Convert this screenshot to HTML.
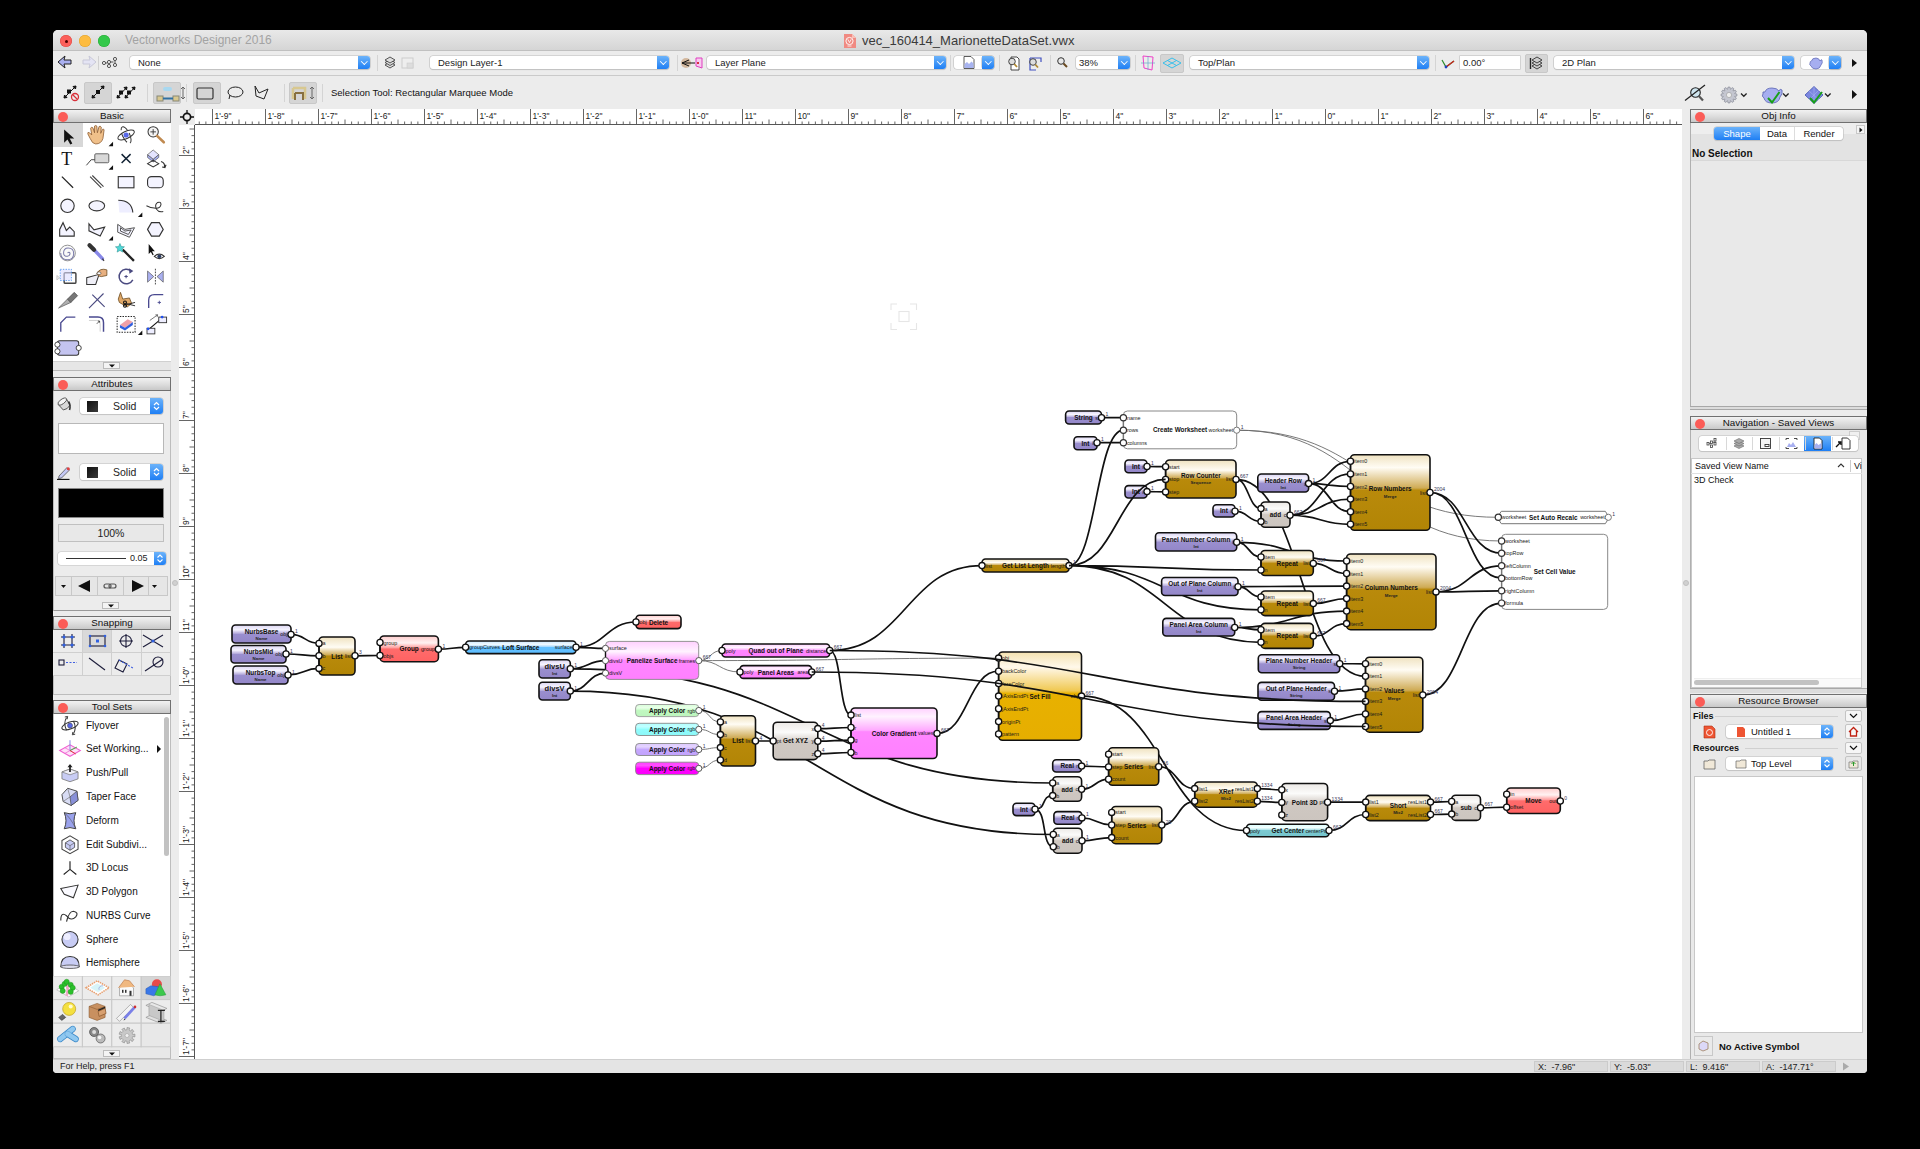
<!DOCTYPE html><html><head><meta charset="utf-8"><title>Vectorworks</title><style>

*{margin:0;padding:0;box-sizing:border-box}
html,body{width:1920px;height:1149px;background:#000;overflow:hidden;font-family:"Liberation Sans",sans-serif;color:#111}
.a{position:absolute}
.tl{position:absolute;width:12px;height:12px;border-radius:50%}
.dd{position:absolute;height:13px;background:#fff;border-radius:3px;box-shadow:0 0 0 0.6px #c0c0c0,0 0.6px 1px rgba(0,0,0,.18);font-size:9.5px;line-height:13px;padding-left:8px;color:#222;white-space:nowrap}
.dd .bb{position:absolute;right:0;top:0;width:12px;height:13px;border-radius:0 3px 3px 0;background:linear-gradient(#6cb3fa,#1f7ff4)}
.dd .bb:after{content:"";position:absolute;left:3.6px;top:2.6px;width:3.6px;height:3.6px;border-right:1.3px solid #fff;border-bottom:1.3px solid #fff;transform:rotate(45deg)}
.sep{position:absolute;width:1px;background:#d4d4d4}
.pbtn{position:absolute;background:#d5d5d5;border:1px solid #c8c8c8;border-radius:2px}
.ph{position:absolute;height:14px;background:linear-gradient(#f2f2f2,#dcdcdc 55%,#c8c8c8);border:1px solid #707070;font-size:9.8px;line-height:12px;text-align:center;color:#111}
.ph .cl{position:absolute;left:4px;top:1.5px;width:10px;height:10px;border-radius:50%;background:#fb5c57}
.rt{position:absolute;font-size:8.5px;color:#222;white-space:nowrap;line-height:9px}

</style></head><body>
<div class="a" style="left:53px;top:30px;width:1814px;height:1043px;background:#ececec;border-radius:5px 5px 4px 4px"></div>
<div class="a" style="left:53px;top:30px;width:1814px;height:21px;background:linear-gradient(#e9e9e9,#d5d5d5);border-bottom:1px solid #c0c0c0;border-radius:5px 5px 0 0"></div>
<div class="tl" style="left:60px;top:35px;background:#fc605b;box-shadow:inset 0 0 0 0.5px #de4a44"></div>
<div class="tl" style="left:79px;top:35px;background:#fdbc40;box-shadow:inset 0 0 0 0.5px #dfa02c"></div>
<div class="tl" style="left:98px;top:35px;background:#34c84a;box-shadow:inset 0 0 0 0.5px #27aa36"></div>
<div class="a" style="left:64.5px;top:39.5px;width:3px;height:3px;border-radius:50%;background:#4d0000"></div>
<div class="a" style="left:125px;top:33px;font-size:12px;color:#a3a3a3">Vectorworks Designer 2016</div>
<svg class="a" style="left:843px;top:33px" width="14" height="16"><path d="M1 1 H9 L13 5 V15 H1Z" fill="#f08a82"/><path d="M9 1 V5 H13" fill="#f8c0b8"/><circle cx="6.5" cy="8" r="3.6" fill="none" stroke="#fff" stroke-width="0.9"/><path d="M4.8 6.3 L6.5 9.5 L8.2 6.3" fill="none" stroke="#fff" stroke-width="0.8"/><path d="M4.5 13 H8.5" stroke="#fff" stroke-width="0.8"/></svg>
<div class="a" style="left:862px;top:33px;font-size:13px;color:#3a3a3a">vec_160414_MarionetteDataSet.vwx</div>
<div class="a" style="left:53px;top:75px;width:1814px;height:1px;background:#cacaca"></div>
<svg class="a" style="left:55px;top:53px" width="60" height="20"><path d="M3 9 L10 3 L9 7 L16 7 L16 11 L9 11 L10 15 Z" fill="#aab0f0" stroke="#222" stroke-width="1"/><path d="M41 9 L34 3 L35 7 L28 7 L28 11 L35 11 L34 15 Z" fill="#e4e4f4" stroke="#c8c8d8" stroke-width="1"/><line x1="43.5" y1="3" x2="43.5" y2="17" stroke="#d0d0d0"/></svg>
<svg class="a" style="left:101px;top:55px" width="20" height="16"><g fill="none" stroke="#555" stroke-width="1"><circle cx="3" cy="8" r="1.6"/><circle cx="8" cy="7" r="1.6"/><circle cx="8" cy="11" r="1.6"/><circle cx="14" cy="4" r="1.6"/><circle cx="14" cy="10" r="1.6"/><path d="M4.5 8 H6.5 M9.5 7 H12.5 M14 5.5 V8.5"/></g></svg>
<div class="dd" style="left:130px;top:56px;width:240px;font-size:9.5px">None<div class="bb"></div></div>
<div class="sep" style="left:377px;top:55px;height:16px"></div>
<svg class="a" style="left:383px;top:55px" width="34" height="16"><g stroke="#444" fill="#ddd" stroke-width="0.9"><path d="M2 10 L7 13 L12 10 L7 7Z"/><path d="M2 7.5 L7 10.5 L12 7.5 L7 4.5Z"/><path d="M2 5 L7 8 L12 5 L7 2Z"/></g><rect x="19" y="3" width="11" height="10" fill="#eee" stroke="#ccc"/><rect x="24" y="8" width="6" height="5" fill="#ddd" stroke="#ccc" stroke-width="0.6"/></svg>
<div class="dd" style="left:430px;top:56px;width:239px;font-size:9.5px">Design Layer-1<div class="bb"></div></div>
<div class="sep" style="left:677px;top:55px;height:16px"></div>
<svg class="a" style="left:680px;top:55px" width="26" height="16"><ellipse cx="6" cy="8" rx="5" ry="5" fill="#c9a27e" opacity=".7"/><path d="M2 8 L9 5 M2 8 L9 11 M2 8 H15" stroke="#111" stroke-width="1" fill="none"/><path d="M16 3 L22 3 L22 13 L16 11Z" fill="#f8c8f0" stroke="#e040c0" stroke-width="1"/><circle cx="18" cy="8" r="1" fill="#c00"/></svg>
<div class="dd" style="left:707px;top:56px;width:239px;font-size:9.5px">Layer Plane<div class="bb"></div></div>
<div class="sep" style="left:950px;top:55px;height:16px"></div>
<div class="a" style="left:954px;top:56px;width:40px;height:13px;background:#fff;border-radius:3px;box-shadow:0 0 0 0.6px #c0c0c0"></div>
<svg class="a" style="left:962px;top:55px" width="14" height="15"><path d="M2 1.5 H9 L12 4.5 V13.5 H2Z" fill="#fff" stroke="#333" stroke-width="0.8"/><path d="M2.5 13 V9 L5 7 L7 9 L9.5 6.5 L11.5 8.5 V13Z" fill="#a8b4f0"/></svg>
<div class="dd" style="left:982px;top:56px;width:12px;padding:0"><div class="bb"></div></div>
<div class="sep" style="left:999px;top:55px;height:16px"></div>
<svg class="a" style="left:1004px;top:54px" width="40" height="18"><g fill="none" stroke="#333" stroke-width="0.9"><path d="M7 3 H13 L15 5 V16 H7Z" fill="#fff"/><circle cx="8" cy="7.5" r="3.3" fill="#ddd"/><path d="M10.3 10 L13 13" stroke="#b08830" stroke-width="1.8"/><path d="M26 4 H37 V8 M26 4 V16 H32" stroke="#4050c0" stroke-width="1.2"/><circle cx="29" cy="8" r="3.3" fill="#ddd"/><path d="M31.3 10.5 L34 13.5" stroke="#b08830" stroke-width="1.8"/></g></svg>
<div class="sep" style="left:1050px;top:55px;height:16px"></div>
<svg class="a" style="left:1055px;top:55px" width="16" height="16"><circle cx="6" cy="6" r="3.3" fill="#e8e8e8" stroke="#333" stroke-width="1"/><path d="M8.5 8.5 L12 12" stroke="#6a4a20" stroke-width="2"/></svg>
<div class="dd" style="left:1076px;top:56px;width:54px;font-size:9.5px;padding-left:3px">38%<div class="bb"></div></div>
<div class="sep" style="left:1135px;top:55px;height:16px"></div>
<svg class="a" style="left:1139px;top:54px" width="18" height="18"><path d="M4 2 L14 3 L13 16 L5 14Z" fill="none" stroke="#ee40c8" stroke-width="1"/><path d="M2 9 H16 M9 2 V16" stroke="#6ac" stroke-width="0.7"/></svg>
<div class="pbtn" style="left:1160px;top:54px;width:24px;height:19px"></div>
<svg class="a" style="left:1161px;top:56px" width="22" height="14"><path d="M2 7 L11 2 L20 7 L11 12Z M6.5 4.5 L15.5 9.5 M15.5 4.5 L6.5 9.5" fill="none" stroke="#3ac0ea" stroke-width="1"/></svg>
<div class="dd" style="left:1190px;top:56px;width:239px;font-size:9.5px">Top/Plan<div class="bb"></div></div>
<div class="sep" style="left:1435px;top:55px;height:16px"></div>
<svg class="a" style="left:1439px;top:54px" width="18" height="18"><path d="M3 6 L7 13 L15 7" fill="none" stroke="#2a8a2a" stroke-width="1.2"/><path d="M7 13 L15 7" stroke="#d02020" stroke-width="1.2"/><circle cx="7" cy="13" r="1.4" fill="#2040c0"/></svg>
<div class="a" style="left:1460px;top:56px;width:60px;height:13px;background:#fff;box-shadow:0 0 0 0.6px #c0c0c0;font-size:9.5px;line-height:13px;padding-left:3px;color:#222">0.00°</div>
<div class="pbtn" style="left:1525px;top:54px;width:23px;height:19px"></div>
<svg class="a" style="left:1529px;top:56px" width="16" height="15"><g stroke="#333" fill="#ccc" stroke-width="0.9"><path d="M3 10 L8 13 L13 10 L8 7Z"/><path d="M3 7 L8 10 L13 7 L8 4Z"/><path d="M3 4 L8 7 L13 4 L8 1Z"/></g><path d="M1.5 2 V13" stroke="#222" stroke-width="1.4"/></svg>
<div class="dd" style="left:1554px;top:56px;width:240px;font-size:9.5px">2D Plan<div class="bb"></div></div>
<div class="a" style="left:1801px;top:56px;width:40px;height:13px;background:#fff;border-radius:3px;box-shadow:0 0 0 0.6px #c0c0c0"></div>
<svg class="a" style="left:1808px;top:55px" width="16" height="15"><path d="M2 8 Q1 10 3 11 Q4 14 8 14 Q12 14 13 10 Q15 8 14 5 Q13 4 12 6 Q11 3 8 3 Q4 3 3.5 6 Q2 6 2 8Z" fill="#a6aef0" stroke="#5a64b0" stroke-width="0.7"/></svg>
<div class="dd" style="left:1829px;top:56px;width:12px;padding:0"><div class="bb"></div></div>
<svg class="a" style="left:1850px;top:57px" width="10" height="12"><path d="M2 2 L7 6 L2 10Z" fill="#111"/></svg>
<div class="pbtn" style="left:84px;top:82px;width:28px;height:22px"></div>
<div class="pbtn" style="left:153px;top:82px;width:28px;height:22px"></div>
<div class="pbtn" style="left:193px;top:82px;width:28px;height:22px"></div>
<div class="pbtn" style="left:289px;top:82px;width:28px;height:22px"></div>
<div class="sep" style="left:147px;top:84px;height:18px"></div>
<div class="sep" style="left:186px;top:84px;height:18px"></div>
<div class="sep" style="left:284px;top:84px;height:18px"></div>
<div class="sep" style="left:322px;top:84px;height:18px"></div>
<svg class="a" style="left:60px;top:82px" width="270" height="24"><g stroke="#111" stroke-width="1" fill="#111">
<path d="M4 16 L16 4" /><rect x="7.5" y="8" width="3" height="3"/><path d="M16 4 l-3 0.5 l2.5 2.5z M4 16 l3-0.5 l-2.5-2.5z"/>
<circle cx="15" cy="15" r="3.5" fill="none" stroke="#d8303a" stroke-width="1.3"/><path d="M12.5 12.5 L17.5 17.5" stroke="#d8303a" stroke-width="1.3"/>
<path d="M32 16 L44 4"/><rect x="36.5" y="8.5" width="3" height="3"/><path d="M44 4 l-3 0.5 l2.5 2.5z M32 16 l3-0.5 l-2.5-2.5z"/>
<path d="M57 16 L67 5 M65 16 L75 5"/><rect x="59.5" y="9" width="3" height="3"/><rect x="67.5" y="9" width="3" height="3"/><path d="M67 5 l-3 0.5 l2.5 2.5z M75 5 l-3 0.5 l2.5 2.5z M57 16 l3-0.5 l-2.5-2.5z M65 16 l3-0.5 l-2.5-2.5z"/>
</g>
<g><rect x="103" y="5" width="9" height="4" rx="2" fill="#a8d8f0"/><rect x="97" y="14" width="6" height="5" fill="#d8c890" stroke="#887"/><rect x="113" y="14" width="6" height="5" fill="#d8c890" stroke="#887"/><path d="M103 16.5 H113" stroke="#3070a0" stroke-width="2"/><path d="M123 5 V17 M121 7 L123 5 L125 7 M121 15 L123 17 L125 15" stroke="#666" fill="none"/></g>
<rect x="137" y="6" width="16" height="11" rx="1.5" fill="none" stroke="#333" stroke-width="1.2"/>
<ellipse cx="175.5" cy="10" rx="7.5" ry="5" fill="none" stroke="#222" stroke-width="1"/><path d="M170 13 L169 17" stroke="#222"/>
<path d="M195 4 L199 11 L208 7 L204 17 L196 14Z" fill="none" stroke="#222" stroke-width="1"/>
<path d="M233 6 H245 V17 M233 6 V17" fill="none" stroke="#d8c890" stroke-width="2.5"/><path d="M235 11 H243 V18 M235 11 V18" fill="none" stroke="#887040" stroke-width="2"/><path d="M252 5 V17 M250 7 L252 5 L254 7 M250 15 L252 17 L254 15" stroke="#666" fill="none"/>
</svg>
<div class="a" style="left:331px;top:87px;font-size:9.5px;color:#111">Selection Tool: Rectangular Marquee Mode</div>
<svg class="a" style="left:1680px;top:82px" width="190" height="26"><g fill="none" stroke="#222" stroke-width="1.1">
<circle cx="15.5" cy="10.5" r="4.8" fill="#cfe6f0"/><path d="M18.8 14 L23 18.5" stroke-width="2.2" stroke="#555"/><path d="M5 18.5 L25 3" stroke-width="1.2"/>
</g>
<path d="M56.9 12.0 L56.9 14.0 L54.6 14.5 L56.4 16.1 L55.4 17.8 L53.1 17.1 L53.8 19.4 L52.1 20.4 L50.5 18.6 L50.0 20.9 L48.0 20.9 L47.5 18.6 L45.9 20.4 L44.2 19.4 L44.9 17.1 L42.6 17.8 L41.6 16.1 L43.4 14.5 L41.1 14.0 L41.1 12.0 L43.4 11.5 L41.6 9.9 L42.6 8.2 L44.9 8.9 L44.2 6.6 L45.9 5.6 L47.5 7.4 L48.0 5.1 L50.0 5.1 L50.5 7.4 L52.1 5.6 L53.8 6.6 L53.1 8.9 L55.4 8.2 L56.4 9.9 L54.6 11.5Z" fill="#c4c6d0" stroke="#8a8c98" stroke-width="0.7"/><circle cx="49" cy="13" r="2.6" fill="#eee" stroke="#999" stroke-width="0.6"/><path d="M61 11.5 l2.8 2.8 l2.8-2.8" stroke="#222" stroke-width="1.3" fill="none"/>
<path d="M83 12 Q81 14 84 16 Q85 21 92 21 Q99 21 100 15 Q103 12 102 8 Q100 6 99 9 Q97 6 92 6 Q86 6 85 10 Q82 9 83 12Z" fill="#a6aef0" stroke="#5a64b0" stroke-width="0.8"/><path d="M88 16 L92 20.5 L99.5 10" stroke="#18a018" stroke-width="2" fill="none"/><path d="M103 11.5 l2.8 2.8 l2.8-2.8" stroke="#222" stroke-width="1.3" fill="none"/>
<path d="M125 13 L134 4.5 L143 13 L134 21.5Z" fill="#7c88e0" stroke="#4050b0" stroke-width="0.8"/><path d="M129 9 L139 18 M134 5 L134 21 M139 8 L129 18" stroke="#a8b4f4" stroke-width="0.6"/><path d="M130 16 L134 20.5 L142 10" stroke="#18a018" stroke-width="2" fill="none"/><path d="M145 11.5 l2.8 2.8 l2.8-2.8" stroke="#222" stroke-width="1.3" fill="none"/>
<path d="M172 8 L177 12.5 L172 17Z" fill="#111"/>
</svg>
<div class="a" style="left:53px;top:1059px;width:1814px;height:14px;background:#e4e4e4;border-top:1px solid #cfcfcf;border-radius:0 0 4px 4px"></div>
<div class="a" style="left:60px;top:1061px;font-size:9px;color:#222">For Help, press F1</div>
<div class="a" style="left:1534px;top:1061px;width:74px;height:11px;background:#dadada;border:1px solid #cbcbcb;font-size:9px;line-height:10px;padding-left:3px;color:#222">X:&nbsp; -7.96"</div>
<div class="a" style="left:1610px;top:1061px;width:74px;height:11px;background:#dadada;border:1px solid #cbcbcb;font-size:9px;line-height:10px;padding-left:3px;color:#222">Y:&nbsp; -5.03"</div>
<div class="a" style="left:1686px;top:1061px;width:74px;height:11px;background:#dadada;border:1px solid #cbcbcb;font-size:9px;line-height:10px;padding-left:3px;color:#222">L:&nbsp; 9.416"</div>
<div class="a" style="left:1762px;top:1061px;width:74px;height:11px;background:#dadada;border:1px solid #cbcbcb;font-size:9px;line-height:10px;padding-left:3px;color:#222">A:&nbsp; -147.71°</div>
<svg class="a" style="left:1840px;top:1061px" width="12" height="11"><path d="M3 1.5 L9 5.5 L3 9.5Z" fill="#aaa"/></svg>
<div class="a" style="left:179px;top:109px;width:1503px;height:950px;background:#fff"></div>
<svg class="a" style="left:179px;top:109px" width="1503" height="950">
<rect x="0" y="0" width="16" height="16" fill="#ececec"/>
<g transform="translate(8,8)" stroke="#111" fill="none"><circle r="3.6" stroke-width="1.7"/><path d="M-7 0 H-3 M3 0 H7 M0 -7 V-3 M0 3 V7" stroke-width="1.3"/></g>
<path d="M16 15.5 H1503" stroke="#555" stroke-width="1"/>
<path d="M15.5 16 V950" stroke="#555" stroke-width="1"/>
<path d="M20.25 12.5 V15 M26.88 12.5 V15 M33.50 0 V15 M40.12 12.5 V15 M46.75 12.5 V15 M53.38 12.5 V15 M60.00 10.5 V15 M66.62 12.5 V15 M73.25 12.5 V15 M79.88 12.5 V15 M86.50 0 V15 M93.12 12.5 V15 M99.75 12.5 V15 M106.38 12.5 V15 M113.00 10.5 V15 M119.62 12.5 V15 M126.25 12.5 V15 M132.88 12.5 V15 M139.50 0 V15 M146.12 12.5 V15 M152.75 12.5 V15 M159.38 12.5 V15 M166.00 10.5 V15 M172.62 12.5 V15 M179.25 12.5 V15 M185.88 12.5 V15 M192.50 0 V15 M199.12 12.5 V15 M205.75 12.5 V15 M212.38 12.5 V15 M219.00 10.5 V15 M225.62 12.5 V15 M232.25 12.5 V15 M238.88 12.5 V15 M245.50 0 V15 M252.12 12.5 V15 M258.75 12.5 V15 M265.38 12.5 V15 M272.00 10.5 V15 M278.62 12.5 V15 M285.25 12.5 V15 M291.88 12.5 V15 M298.50 0 V15 M305.12 12.5 V15 M311.75 12.5 V15 M318.38 12.5 V15 M325.00 10.5 V15 M331.62 12.5 V15 M338.25 12.5 V15 M344.88 12.5 V15 M351.50 0 V15 M358.12 12.5 V15 M364.75 12.5 V15 M371.38 12.5 V15 M378.00 10.5 V15 M384.62 12.5 V15 M391.25 12.5 V15 M397.88 12.5 V15 M404.50 0 V15 M411.12 12.5 V15 M417.75 12.5 V15 M424.38 12.5 V15 M431.00 10.5 V15 M437.62 12.5 V15 M444.25 12.5 V15 M450.88 12.5 V15 M457.50 0 V15 M464.12 12.5 V15 M470.75 12.5 V15 M477.38 12.5 V15 M484.00 10.5 V15 M490.62 12.5 V15 M497.25 12.5 V15 M503.88 12.5 V15 M510.50 0 V15 M517.12 12.5 V15 M523.75 12.5 V15 M530.38 12.5 V15 M537.00 10.5 V15 M543.62 12.5 V15 M550.25 12.5 V15 M556.88 12.5 V15 M563.50 0 V15 M570.12 12.5 V15 M576.75 12.5 V15 M583.38 12.5 V15 M590.00 10.5 V15 M596.62 12.5 V15 M603.25 12.5 V15 M609.88 12.5 V15 M616.50 0 V15 M623.12 12.5 V15 M629.75 12.5 V15 M636.38 12.5 V15 M643.00 10.5 V15 M649.62 12.5 V15 M656.25 12.5 V15 M662.88 12.5 V15 M669.50 0 V15 M676.12 12.5 V15 M682.75 12.5 V15 M689.38 12.5 V15 M696.00 10.5 V15 M702.62 12.5 V15 M709.25 12.5 V15 M715.88 12.5 V15 M722.50 0 V15 M729.12 12.5 V15 M735.75 12.5 V15 M742.38 12.5 V15 M749.00 10.5 V15 M755.62 12.5 V15 M762.25 12.5 V15 M768.88 12.5 V15 M775.50 0 V15 M782.12 12.5 V15 M788.75 12.5 V15 M795.38 12.5 V15 M802.00 10.5 V15 M808.62 12.5 V15 M815.25 12.5 V15 M821.88 12.5 V15 M828.50 0 V15 M835.12 12.5 V15 M841.75 12.5 V15 M848.38 12.5 V15 M855.00 10.5 V15 M861.62 12.5 V15 M868.25 12.5 V15 M874.88 12.5 V15 M881.50 0 V15 M888.12 12.5 V15 M894.75 12.5 V15 M901.38 12.5 V15 M908.00 10.5 V15 M914.62 12.5 V15 M921.25 12.5 V15 M927.88 12.5 V15 M934.50 0 V15 M941.12 12.5 V15 M947.75 12.5 V15 M954.38 12.5 V15 M961.00 10.5 V15 M967.62 12.5 V15 M974.25 12.5 V15 M980.88 12.5 V15 M987.50 0 V15 M994.12 12.5 V15 M1000.75 12.5 V15 M1007.38 12.5 V15 M1014.00 10.5 V15 M1020.62 12.5 V15 M1027.25 12.5 V15 M1033.88 12.5 V15 M1040.50 0 V15 M1047.12 12.5 V15 M1053.75 12.5 V15 M1060.38 12.5 V15 M1067.00 10.5 V15 M1073.62 12.5 V15 M1080.25 12.5 V15 M1086.88 12.5 V15 M1093.50 0 V15 M1100.12 12.5 V15 M1106.75 12.5 V15 M1113.38 12.5 V15 M1120.00 10.5 V15 M1126.62 12.5 V15 M1133.25 12.5 V15 M1139.88 12.5 V15 M1146.50 0 V15 M1153.12 12.5 V15 M1159.75 12.5 V15 M1166.38 12.5 V15 M1173.00 10.5 V15 M1179.62 12.5 V15 M1186.25 12.5 V15 M1192.88 12.5 V15 M1199.50 0 V15 M1206.12 12.5 V15 M1212.75 12.5 V15 M1219.38 12.5 V15 M1226.00 10.5 V15 M1232.62 12.5 V15 M1239.25 12.5 V15 M1245.88 12.5 V15 M1252.50 0 V15 M1259.12 12.5 V15 M1265.75 12.5 V15 M1272.38 12.5 V15 M1279.00 10.5 V15 M1285.62 12.5 V15 M1292.25 12.5 V15 M1298.88 12.5 V15 M1305.50 0 V15 M1312.12 12.5 V15 M1318.75 12.5 V15 M1325.38 12.5 V15 M1332.00 10.5 V15 M1338.62 12.5 V15 M1345.25 12.5 V15 M1351.88 12.5 V15 M1358.50 0 V15 M1365.12 12.5 V15 M1371.75 12.5 V15 M1378.38 12.5 V15 M1385.00 10.5 V15 M1391.62 12.5 V15 M1398.25 12.5 V15 M1404.88 12.5 V15 M1411.50 0 V15 M1418.12 12.5 V15 M1424.75 12.5 V15 M1431.38 12.5 V15 M1438.00 10.5 V15 M1444.62 12.5 V15 M1451.25 12.5 V15 M1457.88 12.5 V15 M1464.50 0 V15 M1471.12 12.5 V15 M1477.75 12.5 V15 M1484.38 12.5 V15 M1491.00 10.5 V15 M1497.62 12.5 V15 M10.5 20.00 H15 M12.5 26.62 H15 M12.5 33.25 H15 M12.5 39.88 H15 M0 46.50 H15 M12.5 53.12 H15 M12.5 59.75 H15 M12.5 66.38 H15 M10.5 73.00 H15 M12.5 79.62 H15 M12.5 86.25 H15 M12.5 92.88 H15 M0 99.50 H15 M12.5 106.12 H15 M12.5 112.75 H15 M12.5 119.38 H15 M10.5 126.00 H15 M12.5 132.62 H15 M12.5 139.25 H15 M12.5 145.88 H15 M0 152.50 H15 M12.5 159.12 H15 M12.5 165.75 H15 M12.5 172.38 H15 M10.5 179.00 H15 M12.5 185.62 H15 M12.5 192.25 H15 M12.5 198.88 H15 M0 205.50 H15 M12.5 212.12 H15 M12.5 218.75 H15 M12.5 225.38 H15 M10.5 232.00 H15 M12.5 238.62 H15 M12.5 245.25 H15 M12.5 251.88 H15 M0 258.50 H15 M12.5 265.12 H15 M12.5 271.75 H15 M12.5 278.38 H15 M10.5 285.00 H15 M12.5 291.62 H15 M12.5 298.25 H15 M12.5 304.88 H15 M0 311.50 H15 M12.5 318.12 H15 M12.5 324.75 H15 M12.5 331.38 H15 M10.5 338.00 H15 M12.5 344.62 H15 M12.5 351.25 H15 M12.5 357.88 H15 M0 364.50 H15 M12.5 371.12 H15 M12.5 377.75 H15 M12.5 384.38 H15 M10.5 391.00 H15 M12.5 397.62 H15 M12.5 404.25 H15 M12.5 410.88 H15 M0 417.50 H15 M12.5 424.12 H15 M12.5 430.75 H15 M12.5 437.38 H15 M10.5 444.00 H15 M12.5 450.62 H15 M12.5 457.25 H15 M12.5 463.88 H15 M0 470.50 H15 M12.5 477.12 H15 M12.5 483.75 H15 M12.5 490.38 H15 M10.5 497.00 H15 M12.5 503.62 H15 M12.5 510.25 H15 M12.5 516.88 H15 M0 523.50 H15 M12.5 530.12 H15 M12.5 536.75 H15 M12.5 543.38 H15 M10.5 550.00 H15 M12.5 556.62 H15 M12.5 563.25 H15 M12.5 569.88 H15 M0 576.50 H15 M12.5 583.12 H15 M12.5 589.75 H15 M12.5 596.38 H15 M10.5 603.00 H15 M12.5 609.62 H15 M12.5 616.25 H15 M12.5 622.88 H15 M0 629.50 H15 M12.5 636.12 H15 M12.5 642.75 H15 M12.5 649.38 H15 M10.5 656.00 H15 M12.5 662.62 H15 M12.5 669.25 H15 M12.5 675.88 H15 M0 682.50 H15 M12.5 689.12 H15 M12.5 695.75 H15 M12.5 702.38 H15 M10.5 709.00 H15 M12.5 715.62 H15 M12.5 722.25 H15 M12.5 728.88 H15 M0 735.50 H15 M12.5 742.12 H15 M12.5 748.75 H15 M12.5 755.38 H15 M10.5 762.00 H15 M12.5 768.62 H15 M12.5 775.25 H15 M12.5 781.88 H15 M0 788.50 H15 M12.5 795.12 H15 M12.5 801.75 H15 M12.5 808.38 H15 M10.5 815.00 H15 M12.5 821.62 H15 M12.5 828.25 H15 M12.5 834.88 H15 M0 841.50 H15 M12.5 848.12 H15 M12.5 854.75 H15 M12.5 861.38 H15 M10.5 868.00 H15 M12.5 874.62 H15 M12.5 881.25 H15 M12.5 887.88 H15 M0 894.50 H15 M12.5 901.12 H15 M12.5 907.75 H15 M12.5 914.38 H15 M10.5 921.00 H15 M12.5 927.62 H15 M12.5 934.25 H15 M12.5 940.88 H15 M0 947.50 H15" stroke="#555" stroke-width="0.9" fill="none"/>
</svg>
<div class="rt" style="left:214.5px;top:112px">1'-9"</div>
<div class="rt" style="left:267.5px;top:112px">1'-8"</div>
<div class="rt" style="left:320.5px;top:112px">1'-7"</div>
<div class="rt" style="left:373.5px;top:112px">1'-6"</div>
<div class="rt" style="left:426.5px;top:112px">1'-5"</div>
<div class="rt" style="left:479.5px;top:112px">1'-4"</div>
<div class="rt" style="left:532.5px;top:112px">1'-3"</div>
<div class="rt" style="left:585.5px;top:112px">1'-2"</div>
<div class="rt" style="left:638.5px;top:112px">1'-1"</div>
<div class="rt" style="left:691.5px;top:112px">1'-0"</div>
<div class="rt" style="left:744.5px;top:112px">11"</div>
<div class="rt" style="left:797.5px;top:112px">10"</div>
<div class="rt" style="left:850.5px;top:112px">9"</div>
<div class="rt" style="left:903.5px;top:112px">8"</div>
<div class="rt" style="left:956.5px;top:112px">7"</div>
<div class="rt" style="left:1009.5px;top:112px">6"</div>
<div class="rt" style="left:1062.5px;top:112px">5"</div>
<div class="rt" style="left:1115.5px;top:112px">4"</div>
<div class="rt" style="left:1168.5px;top:112px">3"</div>
<div class="rt" style="left:1221.5px;top:112px">2"</div>
<div class="rt" style="left:1274.5px;top:112px">1"</div>
<div class="rt" style="left:1327.5px;top:112px">0"</div>
<div class="rt" style="left:1380.5px;top:112px">1"</div>
<div class="rt" style="left:1433.5px;top:112px">2"</div>
<div class="rt" style="left:1486.5px;top:112px">3"</div>
<div class="rt" style="left:1539.5px;top:112px">4"</div>
<div class="rt" style="left:1592.5px;top:112px">5"</div>
<div class="rt" style="left:1645.5px;top:112px">6"</div>
<div class="rt" style="left:182px;top:153.5px;transform-origin:0 0;transform:rotate(-90deg)">2"</div>
<div class="rt" style="left:182px;top:206.5px;transform-origin:0 0;transform:rotate(-90deg)">3"</div>
<div class="rt" style="left:182px;top:259.5px;transform-origin:0 0;transform:rotate(-90deg)">4"</div>
<div class="rt" style="left:182px;top:312.5px;transform-origin:0 0;transform:rotate(-90deg)">5"</div>
<div class="rt" style="left:182px;top:365.5px;transform-origin:0 0;transform:rotate(-90deg)">6"</div>
<div class="rt" style="left:182px;top:418.5px;transform-origin:0 0;transform:rotate(-90deg)">7"</div>
<div class="rt" style="left:182px;top:471.5px;transform-origin:0 0;transform:rotate(-90deg)">8"</div>
<div class="rt" style="left:182px;top:524.5px;transform-origin:0 0;transform:rotate(-90deg)">9"</div>
<div class="rt" style="left:182px;top:577.5px;transform-origin:0 0;transform:rotate(-90deg)">10"</div>
<div class="rt" style="left:182px;top:630.5px;transform-origin:0 0;transform:rotate(-90deg)">11"</div>
<div class="rt" style="left:182px;top:683.5px;transform-origin:0 0;transform:rotate(-90deg)">1'-0"</div>
<div class="rt" style="left:182px;top:736.5px;transform-origin:0 0;transform:rotate(-90deg)">1'-1"</div>
<div class="rt" style="left:182px;top:789.5px;transform-origin:0 0;transform:rotate(-90deg)">1'-2"</div>
<div class="rt" style="left:182px;top:842.5px;transform-origin:0 0;transform:rotate(-90deg)">1'-3"</div>
<div class="rt" style="left:182px;top:895.5px;transform-origin:0 0;transform:rotate(-90deg)">1'-4"</div>
<div class="rt" style="left:182px;top:948.5px;transform-origin:0 0;transform:rotate(-90deg)">1'-5"</div>
<div class="rt" style="left:182px;top:1001.5px;transform-origin:0 0;transform:rotate(-90deg)">1'-6"</div>
<div class="rt" style="left:182px;top:1054.5px;transform-origin:0 0;transform:rotate(-90deg)">1'-7"</div>
<div class="a" style="left:53px;top:109px;width:118px;height:950px;background:#ececec"></div>
<div class="ph" style="left:53px;top:109px;width:118px;height:14px">Basic<div class="cl"></div></div>
<div class="a" style="left:53px;top:123px;width:118px;height:238px;background:#fff"></div>
<div class="a" style="left:53px;top:123px;width:30px;height:24px;background:#d7d7d7"></div>
<svg class="a" style="left:53px;top:123px" width="118" height="240"><g transform="translate(14.5,12.0) scale(1.12)"><path d="M-3 -5 L-3 7 L0 4 L2.5 8.5 L4.3 7.5 L2 3.2 L6 3.2Z" fill="#111"/></g><g transform="translate(43.8,12.0) scale(1.12)"><path d="M-6 3 L-8 -1 Q-8.5 -3 -6.5 -2 L-4.5 0 L-5.5 -6 Q-5 -7.5 -3.5 -6.5 L-2 -2 L-2 -8 Q-1 -9 0 -8 L0.5 -2 L2 -7.5 Q3 -8.5 4 -7 L3.5 -1.5 L5 -5 Q6 -6 6.5 -4.5 L5.5 3 Q4 8 -1 8 Q-4 8 -6 3Z" fill="#f0c08a" stroke="#8a5a30" stroke-width="0.7"/><path d="M10.5 10 L14.5 10 L14.5 6Z" fill="#111"/></g><g transform="translate(73.1,12.0) scale(1.12)"><ellipse rx="8" ry="3.2" transform="rotate(-25)" fill="none" stroke="#333" stroke-width="0.9"/><ellipse rx="3.2" ry="8" transform="rotate(-25)" fill="none" stroke="#333" stroke-width="0.9" stroke-dasharray="9 3"/><circle r="2.3" fill="#5868e8"/></g><g transform="translate(102.4,12.0) scale(1.12)"><circle cx="-2" cy="-2.8" r="4.6" fill="#f4f4f4" stroke="#333" stroke-width="0.9"/><path d="M-2 -5.3 V-0.3 M-4.5 -2.8 H0.5" stroke="#333" stroke-width="0.8"/><path d="M1.5 0.8 L7.5 6.5" stroke="#c08a50" stroke-width="2.3" stroke-linecap="round"/></g><g transform="translate(14.5,35.6) scale(1.12)"><text x="-5.5" y="6" font-family="Liberation Serif" font-size="16" fill="#111">T</text></g><g transform="translate(43.8,35.6) scale(1.12)"><rect x="-1.8" y="-4.3" width="12.5" height="8" rx="1" fill="#d8d8d8" stroke="#555" stroke-width="0.8"/><path d="M-9.3 6 L-5 1 L-1.8 1" fill="none" stroke="#333" stroke-width="0.8"/><path d="M10.5 10 L14.5 10 L14.5 6Z" fill="#111"/></g><g transform="translate(73.1,35.6) scale(1.12)"><path d="M-4 -4 L4 4 M4 -4 L-4 4" stroke="#123" stroke-width="1.3"/></g><g transform="translate(102.4,35.6) scale(1.12)"><path d="M-7 -3.5 L-2 -7.7 L3 -3.5 L-2 0.7Z" fill="#e4e4ff" stroke="#555" stroke-width="0.6"/><path d="M-7 -3.5 L-2 0.7 L-2 3 L-7 -1Z M3 -3.5 L-2 0.7 L-2 3 L3 -1Z" fill="#a8b0f0" stroke="#555" stroke-width="0.6"/><path d="M-7 4.5 L-2 1.5 L3 4.5 L-2 7.5Z" fill="none" stroke="#333" stroke-width="0.9"/><path d="M5 2.5 Q9 4 8 7.5 M6 7.5 L8.5 8 L9.5 5.5" fill="none" stroke="#333" stroke-width="1"/></g><g transform="translate(14.5,59.2) scale(1.12)"><path d="M-5 -5 L5 5" stroke="#222" stroke-width="1.1"/></g><g transform="translate(43.8,59.2) scale(1.12)"><path d="M-6 -5 L4 5 M-4 -6 L6 4" stroke="#444" stroke-width="1"/></g><g transform="translate(73.1,59.2) scale(1.12)"><rect x="-7" y="-5" width="14" height="10" fill="#f4f4ff" stroke="#333" stroke-width="1"/></g><g transform="translate(102.4,59.2) scale(1.12)"><rect x="-7" y="-5" width="14" height="10" rx="3.5" fill="#f4f4ff" stroke="#333" stroke-width="1"/></g><g transform="translate(14.5,82.8) scale(1.12)"><circle r="6" fill="#f4f4ff" stroke="#333" stroke-width="1"/></g><g transform="translate(43.8,82.8) scale(1.12)"><ellipse rx="7" ry="4.5" fill="#f4f4ff" stroke="#333" stroke-width="1"/></g><g transform="translate(73.1,82.8) scale(1.12)"><path d="M-7 -5 Q5 -5 6 6 L-6 6Z" fill="#eef" stroke="none"/><path d="M-7 -5 Q5 -5 6 6" fill="none" stroke="#333" stroke-width="1"/><path d="M10.5 10 L14.5 10 L14.5 6Z" fill="#111"/></g><g transform="translate(102.4,82.8) scale(1.12)"><path d="M-8 0 Q-4 2 -1 2 Q4 3 5 -1 Q5 -4 2 -3 Q-1 -1 1 3 Q3 6 7 5" fill="none" stroke="#333" stroke-width="0.9"/></g><g transform="translate(14.5,106.4) scale(1.12)"><path d="M-7 6 L-7 0 L-4 -6 L-1 1 L2 -2 L6 2 L6 6Z" fill="#f4f4ff" stroke="#333" stroke-width="1"/></g><g transform="translate(43.8,106.4) scale(1.12)"><path d="M-7 -5 L-2.5 0.4 L7 -2 L3 5.8 L-7 1.3Z" fill="#f4f4ff" stroke="#333" stroke-width="1"/><path d="M10.5 10 L14.5 10 L14.5 6Z" fill="#111"/></g><g transform="translate(73.1,106.4) scale(1.12)"><path d="M-7.5 -4.5 L-1 0 L7.5 -1.5 L3 7 L-7.5 2.5Z M-5 -1.5 L-1 1.5 L4.5 0.5 L2 4.5 L-5 1.5Z" fill="#f4f4ff" stroke="#444" stroke-width="0.8"/></g><g transform="translate(102.4,106.4) scale(1.12)"><path d="M-7 0 L-3.5 -6 L3.5 -6 L7 0 L3.5 6 L-3.5 6Z" fill="#f4f4ff" stroke="#333" stroke-width="1"/></g><g transform="translate(14.5,130.0) scale(1.12)"><circle r="7" fill="#fafafa" stroke="#888" stroke-width="0.8"/><path d="M0 0 Q1.5 -1.5 2.2 0 Q2.5 2.5 0 3 Q-3.5 3 -3.5 0 Q-3.5 -4.5 0.5 -4.5 Q5.5 -4.5 5.5 0.5 Q5.5 6 0 6 Q-6 6 -6 0" fill="none" stroke="#7a7aa8" stroke-width="0.9"/></g><g transform="translate(43.8,130.0) scale(1.12)"><path d="M-3.5 -4 L5 5" stroke="#8888e8" stroke-width="3" stroke-linecap="round"/><path d="M-6.5 -7 L-2.5 -3" stroke="#333" stroke-width="3.8" stroke-linecap="round"/><path d="M5 5 L6.5 7" stroke="#333" stroke-width="1"/></g><g transform="translate(73.1,130.0) scale(1.12)"><path d="M-3 -3 L7 7" stroke="#222" stroke-width="2"/><path d="M-5.5 -8.5 L-4.3 -5.7 L-1.5 -5.5 L-3.6 -3.6 L-3 -0.8 L-5.5 -2.3 L-8 -0.8 L-7.4 -3.6 L-9.5 -5.5 L-6.7 -5.7Z" fill="#50d8d8" stroke="#2a9090" stroke-width="0.5"/></g><g transform="translate(102.4,130.0) scale(1.12)"><path d="M-6 -8 L-6 1 L-4 -1 L-2.5 2 L-1.5 1.5 L-3 -1.5 L-0.5 -1.5Z" fill="#111"/><path d="M-1 3 Q3.5 -1 8 3 Q3.5 7 -1 3Z" fill="#fff" stroke="#333" stroke-width="0.9"/><circle cx="3.5" cy="3" r="1.7" fill="#2a3a60"/></g><g transform="translate(14.5,153.6) scale(1.12)"><rect x="-3" y="-3.5" width="10.5" height="9.5" rx="1" fill="#fff" stroke="#444" stroke-width="1.3"/><rect x="-6.5" y="-6.5" width="10" height="10" fill="#dcdcff" fill-opacity=".6" stroke="#3a8af0" stroke-width="0.7" stroke-dasharray="1.2 1.2"/><path d="M-9.5 -1 L-7 1 L-9.5 3Z" fill="#eee" stroke="#aaa" stroke-width="0.5"/></g><g transform="translate(43.8,153.6) scale(1.12)"><path d="M-9 7 L-9 1 L2 -2 L-1 7Z" fill="#f0f0f8" stroke="#333" stroke-width="0.9"/><path d="M0 -3 Q3 -8 9 -6 L9 -1 L4 0 Q1 0 0 -3Z" fill="#e8b080" stroke="#6a4a20" stroke-width="0.7"/><ellipse cx="2" cy="-3" rx="1.8" ry="1.2" fill="#fff" stroke="#333" stroke-width="0.5"/></g><g transform="translate(73.1,153.6) scale(1.12)"><path d="M4.5 -5 A6.5 6.5 0 1 0 6 3" fill="none" stroke="#4a4a80" stroke-width="1.3"/><path d="M2.5 -7.5 L6.5 -5 L3 -2.5Z" fill="#4a4a80"/><path d="M-1.5 0 H1.5 M0 -1.5 V1.5" stroke="#4a4a80" stroke-width="0.9"/></g><g transform="translate(102.4,153.6) scale(1.12)"><path d="M0 -7 V7" stroke="#333" stroke-width="0.8" stroke-dasharray="1.5 1"/><path d="M-7 -5 L-1.5 0 L-7 5Z M7 -5 L1.5 0 L7 5Z" fill="#aab0f0" stroke="#555" stroke-width="0.6"/></g><g transform="translate(14.5,177.2) scale(1.12)"><path d="M-8 7 L0 -1 L3 2 Z" fill="#b0b0b0" stroke="#555" stroke-width="0.6"/><path d="M0 -1 L6 -7 L9 -4 L3 2Z" fill="#777" stroke="#444" stroke-width="0.6"/></g><g transform="translate(43.8,177.2) scale(1.12)"><path d="M-7 7 L6 -6 M-4 -5 L7 6" stroke="#4a4a80" stroke-width="1"/></g><g transform="translate(73.1,177.2) scale(1.12)"><path d="M-5 -7 L-3 -1 L3 -2 L5 3 L1 6 L-6 2 L-7 -1Z" fill="#e0a868" stroke="#6a4a20" stroke-width="0.7"/><circle cx="-1" cy="2" r="1.3" fill="none" stroke="#111"/><circle cx="-1" cy="5" r="1.3" fill="none" stroke="#111"/><path d="M0 3 L8 5 M0 4 L8 2" stroke="#222" stroke-width="0.8"/></g><g transform="translate(102.4,177.2) scale(1.12)"><path d="M-6 7 V0 Q-6 -5 -1 -5 H7" fill="none" stroke="#4a4a90" stroke-width="1.2"/><path d="M2 2 H5 M3.5 0.5 V3.5" stroke="#4a4a90" stroke-width="0.8"/></g><g transform="translate(14.5,200.8) scale(1.12)"><path d="M-6 7 V-1 L-1 -6 H7" fill="none" stroke="#4a4a90" stroke-width="1.2"/></g><g transform="translate(43.8,200.8) scale(1.12)"><path d="M-7 -6 H1 Q6 -6 6 -1 V7" fill="none" stroke="#4a4a90" stroke-width="1.3"/><path d="M-7 -3 H0 Q3 -3 3 0 V7" fill="none" stroke="#ccc" stroke-width="0.8"/><path d="M0 0 L2.5 -2.5 M1 -2.5 H2.5 V-1" stroke="#333" stroke-width="0.7" fill="none"/></g><g transform="translate(73.1,200.8) scale(1.12)"><rect x="-8" y="-6.5" width="16" height="14" fill="none" stroke="#222" stroke-width="0.9" stroke-dasharray="1.3 1.1"/><path d="M-5.5 1 L1.5 -4 L6 -1.5 L-1 3.5Z" fill="#f0a0a8"/><path d="M-5.5 1 L-1 3.5 L-1 6 L-5.5 3.5Z M-1 3.5 L6 -1.5 L6 1 L-1 6Z" fill="#3060e0"/><path d="M10.5 10 L14.5 10 L14.5 6Z" fill="#111"/></g><g transform="translate(102.4,200.8) scale(1.12)"><path d="M-6 5 L7 -6" stroke="#111" stroke-width="1"/><rect x="-7.5" y="4" width="7" height="5" fill="#eef" stroke="#333" stroke-width="0.8"/><rect x="3" y="-6" width="7" height="5" fill="#eef" stroke="#333" stroke-width="0.8"/><circle cx="-6.5" cy="4.5" r="1.2" fill="#2050f0"/><circle cx="6" cy="-6" r="1.2" fill="#2050f0"/><path d="M-5 -3 L2 -8 M0 -8 L2 -8 L1.5 -6" stroke="#555" stroke-width="0.7" fill="none"/></g><g transform="translate(14.5,224.4) scale(1.12)"><rect x="-9" y="-6" width="19" height="13" rx="2" fill="#c4c4f0" stroke="#333" stroke-width="0.9"/><circle cx="-9" cy="-2.5" r="2.3" fill="#fff" stroke="#333" stroke-width="0.8"/><circle cx="-9" cy="3.5" r="2.3" fill="#fff" stroke="#333" stroke-width="0.8"/><circle cx="10" cy="0.5" r="2.3" fill="#fff" stroke="#333" stroke-width="0.8"/></g></svg>
<div class="a" style="left:53px;top:361px;width:118px;height:10px;background:#e6e6e6;border-top:1px solid #d0d0d0;border-bottom:1px solid #b8b8b8"></div>
<div class="a" style="left:103px;top:362px;width:17px;height:7px;background:#f4f4f4;border:1px solid #bbb"></div>
<svg class="a" style="left:107px;top:363px" width="10" height="6"><path d="M2 1.5 H8 L5 4.5Z" fill="#111"/></svg>
<div class="ph" style="left:53px;top:377px;width:118px;height:14px">Attributes<div class="cl"></div></div>
<div class="a" style="left:53px;top:391px;width:118px;height:220px;background:#ececec;border-left:1px solid #bdbdbd;border-right:1px solid #bdbdbd;border-bottom:1px solid #9a9a9a"></div>
<svg class="a" style="left:56px;top:396px" width="16" height="16"><g transform="rotate(-35 8 8)"><path d="M3 5 L4 12.5 Q8 14.5 12 12.5 L13 5" fill="#d8d8d8" stroke="#444" stroke-width="0.8"/><ellipse cx="8" cy="5" rx="5" ry="2.3" fill="#f4f4f4" stroke="#444" stroke-width="0.8"/></g><path d="M12.5 5.5 Q15 9 13.5 14" stroke="#333" stroke-width="1.6" fill="none"/></svg>
<div class="a" style="left:80px;top:398px;width:83px;height:16px;background:#fff;border-radius:3px;box-shadow:0 0 0 0.6px #c0c0c0,0 0.6px 1px rgba(0,0,0,.15)"></div>
<div class="a" style="left:87px;top:400.5px;width:11px;height:11px;background:linear-gradient(135deg,#111,#3a3a3a)"></div>
<div class="a" style="left:113px;top:400px;font-size:10.5px;color:#222">Solid</div>
<div class="a" style="left:150px;top:398px;width:13px;height:16px;border-radius:0 3px 3px 0;background:linear-gradient(#6cb3fa,#1f7ff4)"></div>
<svg class="a" style="left:151px;top:400px" width="11" height="12"><path d="M3 5 L5.5 2.5 L8 5 M3 7 L5.5 9.5 L8 7" fill="none" stroke="#fff" stroke-width="1.2"/></svg>
<div class="a" style="left:80px;top:464px;width:83px;height:16px;background:#fff;border-radius:3px;box-shadow:0 0 0 0.6px #c0c0c0,0 0.6px 1px rgba(0,0,0,.15)"></div>
<div class="a" style="left:87px;top:466.5px;width:11px;height:11px;background:linear-gradient(135deg,#111,#3a3a3a)"></div>
<div class="a" style="left:113px;top:466px;font-size:10.5px;color:#222">Solid</div>
<div class="a" style="left:150px;top:464px;width:13px;height:16px;border-radius:0 3px 3px 0;background:linear-gradient(#6cb3fa,#1f7ff4)"></div>
<svg class="a" style="left:151px;top:466px" width="11" height="12"><path d="M3 5 L5.5 2.5 L8 5 M3 7 L5.5 9.5 L8 7" fill="none" stroke="#fff" stroke-width="1.2"/></svg>
<div class="a" style="left:58px;top:423px;width:106px;height:31px;background:#fff;border:1px solid #b8b8b8"></div>
<svg class="a" style="left:56px;top:464px" width="16" height="16"><path d="M3 12 L11 3.5 L13.5 6 L5.5 14 L2.5 14.5Z" fill="#c4c8f4" stroke="#444" stroke-width="0.7"/><circle cx="12.3" cy="4.7" r="1.5" fill="#e04040"/><path d="M1 15.5 H13.5" stroke="#111" stroke-width="1.3"/></svg>
<div class="a" style="left:58px;top:488px;width:106px;height:30px;background:#000;border:1px solid #888"></div>
<div class="a" style="left:58px;top:524px;width:106px;height:18px;background:#e8e8e8;border:1px solid #c0c0c0;font-size:10.5px;line-height:16px;text-align:center;color:#222">100%</div>
<div class="a" style="left:58px;top:552px;width:108px;height:13px;background:#fff;border-radius:3px;box-shadow:0 0 0 0.6px #c0c0c0"></div>
<div class="a" style="left:66px;top:558px;width:60px;height:1px;background:#333"></div>
<div class="a" style="left:130px;top:553px;font-size:9px;color:#222">0.05</div>
<div class="a" style="left:154px;top:552px;width:12px;height:13px;border-radius:0 3px 3px 0;background:linear-gradient(#6cb3fa,#1f7ff4)"></div>
<svg class="a" style="left:154px;top:553px" width="12" height="11"><path d="M3.5 4.5 L6 2 L8.5 4.5 M3.5 6.5 L6 9 L8.5 6.5" fill="none" stroke="#fff" stroke-width="1.1"/></svg>
<div class="a" style="left:55px;top:576px;width:113px;height:20px;background:#e6e6e6;border:1px solid #c8c8c8"></div>
<div class="a" style="left:71px;top:577px;width:1px;height:18px;background:#c8c8c8"></div>
<div class="a" style="left:97px;top:577px;width:1px;height:18px;background:#c8c8c8"></div>
<div class="a" style="left:123px;top:577px;width:1px;height:18px;background:#c8c8c8"></div>
<div class="a" style="left:148px;top:577px;width:1px;height:18px;background:#c8c8c8"></div>
<svg class="a" style="left:55px;top:576px" width="113" height="20"><path d="M6 9 H11 L8.5 12Z M150 0" fill="#111"/><path d="M23 10 L35 4 V16Z" fill="#111"/><path d="M77 4 L89 10 L77 16Z" fill="#111"/><path d="M97 9 H102 L99.5 12Z" fill="#111"/><g fill="none" stroke="#555" stroke-width="1.2"><rect x="49" y="8" width="7" height="4" rx="2"/><rect x="54" y="8" width="7" height="4" rx="2"/></g></svg>
<div class="a" style="left:102px;top:602px;width:17px;height:7px;background:#f4f4f4;border:1px solid #bbb"></div>
<svg class="a" style="left:106px;top:603px" width="10" height="6"><path d="M2 1.5 H8 L5 4.5Z" fill="#111"/></svg>
<div class="ph" style="left:53px;top:616px;width:118px;height:14px">Snapping<div class="cl"></div></div>
<div class="a" style="left:53px;top:630px;width:118px;height:65px;background:#e9e9e9;border:1px solid #bdbdbd;border-top:none"></div>
<div class="a" style="left:53.0px;top:630px;width:29.5px;height:23px;background:#ececec;border-right:1px solid #cfcfcf;border-bottom:1px solid #cfcfcf"></div>
<div class="a" style="left:82.5px;top:630px;width:29.5px;height:23px;background:#d9d9d9;border-right:1px solid #cfcfcf;border-bottom:1px solid #cfcfcf"></div>
<div class="a" style="left:112.0px;top:630px;width:29.5px;height:23px;background:#ececec;border-right:1px solid #cfcfcf;border-bottom:1px solid #cfcfcf"></div>
<div class="a" style="left:141.5px;top:630px;width:29.5px;height:23px;background:#ececec;border-right:1px solid #cfcfcf;border-bottom:1px solid #cfcfcf"></div>
<div class="a" style="left:53.0px;top:653px;width:29.5px;height:23px;background:#ececec;border-right:1px solid #cfcfcf;border-bottom:1px solid #cfcfcf"></div>
<div class="a" style="left:82.5px;top:653px;width:29.5px;height:23px;background:#ececec;border-right:1px solid #cfcfcf;border-bottom:1px solid #cfcfcf"></div>
<div class="a" style="left:112.0px;top:653px;width:29.5px;height:23px;background:#ececec;border-right:1px solid #cfcfcf;border-bottom:1px solid #cfcfcf"></div>
<div class="a" style="left:141.5px;top:653px;width:29.5px;height:23px;background:#ececec;border-right:1px solid #cfcfcf;border-bottom:1px solid #cfcfcf"></div>
<svg class="a" style="left:53px;top:630px" width="118" height="46"><g stroke="#1c1c3a" fill="none" stroke-width="1.1">
<path d="M8 7 H22 M8 15 H22 M11 4 V18 M19 4 V18"/>
<rect x="37" y="6" width="15" height="10"/><path d="M66 11 H80 M73 4 V18"/><circle cx="73" cy="11" r="5.5"/><path d="M90 5 L110 17 M90 17 L110 5"/>
<rect x="6" y="30" width="5" height="5"/><path d="M13 32.5 H24" stroke-dasharray="2 1.5" stroke="#4060e0"/>
<path d="M36 28 L52 40"/><path d="M62 38 L66 30 L74 34 L70 42Z" /><path d="M66 30 L80 38" stroke-dasharray="2 1.5" stroke="#4060e0"/>
<path d="M92 41 L110 29"/><circle cx="105" cy="32" r="5"/></g>
<g fill="#3060e0"><circle cx="11" cy="7" r="1.6"/><circle cx="19" cy="7" r="1.6"/><circle cx="11" cy="15" r="1.6"/><circle cx="19" cy="15" r="1.6"/><rect x="43" y="9.5" width="3" height="3"/><circle cx="37" cy="6" r="1.3"/><circle cx="52" cy="6" r="1.3"/><circle cx="37" cy="16" r="1.3"/><circle cx="52" cy="16" r="1.3"/><circle cx="100" cy="11" r="1.6"/></g></svg>
<div class="ph" style="left:53px;top:700px;width:118px;height:14px">Tool Sets<div class="cl"></div></div>
<div class="a" style="left:53px;top:714px;width:118px;height:262px;background:#fff;border-left:1px solid #bdbdbd;border-right:1px solid #bdbdbd"></div>
<div class="a" style="left:164px;top:717px;width:5px;height:139px;background:#c2c2c2;border-radius:3px"></div>
<svg class="a" style="left:53px;top:714px" width="118" height="262"><g transform="translate(17,11.6) scale(1.15)"><ellipse rx="7.5" ry="3" transform="rotate(-20)" fill="none" stroke="#333" stroke-width="0.9"/><path d="M-3 -7 Q-6 -2 -3 4 M3 7 Q6 2 3 -4" fill="none" stroke="#333" stroke-width="0.9"/><path d="M-4.5 -7.5 L-2 -8 L-2.5 -5.5 M4.5 7.5 L2 8 L2.5 5.5" fill="none" stroke="#333" stroke-width="0.8"/><circle r="2.2" fill="#5868e8" stroke="#333" stroke-width="0.4"/></g><g transform="translate(17,35.4) scale(1.15)"><path d="M-9 1 L0 -4 L9 1 L0 6Z" fill="#fde0f8" stroke="#f060d0" stroke-width="0.9"/><path d="M-4.5 -1.5 L4.5 3.5 M4.5 -1.5 L-4.5 3.5" stroke="#f060d0" stroke-width="0.6"/><path d="M0 -8 V1" stroke="#8080e0" stroke-width="0.8"/><path d="M0 1 L6 -2" stroke="#30b030" stroke-width="0.8"/><path d="M0 1 L5 4" stroke="#e03030" stroke-width="0.8"/></g><g transform="translate(17,59.1) scale(1.15)"><path d="M-7 -1 L0 -3.5 L7 -1 V5 L0 7.5 L-7 5Z" fill="#c8ccf4" stroke="#777" stroke-width="0.7"/><path d="M-7 -1 L0 1.5 L7 -1 L0 -3.5Z" fill="#f0f0f8" stroke="#777" stroke-width="0.6"/><path d="M0 -1 V-7" stroke="#222" stroke-width="1.5"/><path d="M-2.2 -5 L0 -8 L2.2 -5Z" fill="#222"/></g><g transform="translate(17,82.9) scale(1.15)"><path d="M-7 -2 L-2 -7.5 L6 -5 L7 3 L1 7.5 L-6 4Z" fill="#d8dcf4" stroke="#444" stroke-width="0.8"/><path d="M-2 -7.5 L0 0 L7 3 M0 0 L-6 4" fill="none" stroke="#777" stroke-width="0.6"/><path d="M0 0 L6 -5 L7 3 L1 7.5Z" fill="#8890d8" stroke="#444" stroke-width="0.6"/></g><g transform="translate(17,106.7) scale(1.15)"><path d="M-5 -7 Q0 -5 5 -7 Q2 0 5 7 Q0 5 -5 7 Q-2 0 -5 -7Z" fill="#9aa2ec" stroke="#333" stroke-width="0.8"/><path d="M-5 -7 Q1 -2 5 7" fill="none" stroke="#555" stroke-width="0.5"/></g><g transform="translate(17,130.5) scale(1.15)"><path d="M-7 -3.5 L0 -7.5 L7 -3.5 V4 L0 8 L-7 4Z" fill="none" stroke="#444" stroke-width="0.9"/><path d="M-4 -1.5 L0 -4 L4 -1.5 V2.5 L0 5 L-4 2.5Z" fill="#c8ccf4" stroke="#444" stroke-width="0.7"/><path d="M-4 -1.5 L0 1 L4 -1.5 M0 1 V5" fill="none" stroke="#444" stroke-width="0.5"/></g><g transform="translate(17,154.2) scale(1.15)"><path d="M0 -6 V1 L-5.5 5.5 M0 1 L5.5 5.5" fill="none" stroke="#222" stroke-width="1"/></g><g transform="translate(17,178.0) scale(1.15)"><path d="M-8 -3 L7 -6 L3 5 L-5 2Z" fill="#fafaff" stroke="#333" stroke-width="0.9"/></g><g transform="translate(17,201.8) scale(1.15)"><path d="M-8 4 Q-8 -4 -3 0 Q1 5 5 1 Q8 -3 3 -4 Q-1 -4 -3 5" fill="none" stroke="#333" stroke-width="1"/></g><g transform="translate(17,225.5) scale(1.15)"><circle r="7" fill="#c8ccf4" stroke="#333" stroke-width="0.9"/><circle cx="-2.5" cy="-2.5" r="3" fill="#eef" /></g><g transform="translate(17,249.3) scale(1.15)"><path d="M-8 3 Q-8 -6 0 -6 Q8 -6 8 3Z" fill="#c8ccf4" stroke="#333" stroke-width="0.9"/><ellipse cx="0" cy="3" rx="8" ry="1.5" fill="#dde" stroke="#333" stroke-width="0.6"/></g><path d="M104 31 L108 35 L104 39Z" fill="#111"/></svg>
<div class="a" style="left:86px;top:719.6px;font-size:10px;color:#111;white-space:nowrap">Flyover</div>
<div class="a" style="left:86px;top:743.4px;font-size:10px;color:#111;white-space:nowrap">Set Working...</div>
<div class="a" style="left:86px;top:767.1px;font-size:10px;color:#111;white-space:nowrap">Push/Pull</div>
<div class="a" style="left:86px;top:790.9px;font-size:10px;color:#111;white-space:nowrap">Taper Face</div>
<div class="a" style="left:86px;top:814.7px;font-size:10px;color:#111;white-space:nowrap">Deform</div>
<div class="a" style="left:86px;top:838.5px;font-size:10px;color:#111;white-space:nowrap">Edit Subdivi...</div>
<div class="a" style="left:86px;top:862.2px;font-size:10px;color:#111;white-space:nowrap">3D Locus</div>
<div class="a" style="left:86px;top:886.0px;font-size:10px;color:#111;white-space:nowrap">3D Polygon</div>
<div class="a" style="left:86px;top:909.8px;font-size:10px;color:#111;white-space:nowrap">NURBS Curve</div>
<div class="a" style="left:86px;top:933.5px;font-size:10px;color:#111;white-space:nowrap">Sphere</div>
<div class="a" style="left:86px;top:957.3px;font-size:10px;color:#111;white-space:nowrap">Hemisphere</div>
<div class="a" style="left:53px;top:976px;width:118px;height:83px;background:#e8e8e8;border:1px solid #bdbdbd;border-top:1px solid #c8c8c8"></div>
<svg class="a" style="left:53px;top:976px" width="118" height="72"><rect x="0.0" y="0.0" width="29.4" height="23.6" fill="#ececec" stroke="#c8c8c8" stroke-width="1"/><rect x="29.4" y="0.0" width="29.4" height="23.6" fill="#ececec" stroke="#c8c8c8" stroke-width="1"/><rect x="58.8" y="0.0" width="29.4" height="23.6" fill="#ececec" stroke="#c8c8c8" stroke-width="1"/><rect x="88.2" y="0.0" width="29.4" height="23.6" fill="#d5d5d5" stroke="#c8c8c8" stroke-width="1"/><rect x="0.0" y="23.6" width="29.4" height="23.6" fill="#ececec" stroke="#c8c8c8" stroke-width="1"/><rect x="29.4" y="23.6" width="29.4" height="23.6" fill="#ececec" stroke="#c8c8c8" stroke-width="1"/><rect x="58.8" y="23.6" width="29.4" height="23.6" fill="#ececec" stroke="#c8c8c8" stroke-width="1"/><rect x="88.2" y="23.6" width="29.4" height="23.6" fill="#ececec" stroke="#c8c8c8" stroke-width="1"/><rect x="0.0" y="47.2" width="29.4" height="23.6" fill="#ececec" stroke="#c8c8c8" stroke-width="1"/><rect x="29.4" y="47.2" width="29.4" height="23.6" fill="#ececec" stroke="#c8c8c8" stroke-width="1"/><rect x="58.8" y="47.2" width="29.4" height="23.6" fill="#ececec" stroke="#c8c8c8" stroke-width="1"/><rect x="88.2" y="47.2" width="29.4" height="23.6" fill="#e8e8e8" stroke="#c8c8c8" stroke-width="1"/><g transform="translate(14.7,11.8)"><path d="M-11 2 L-1 -5 L11 3 L1 9Z" fill="#fff" stroke="#aaa" stroke-width="0.6"/><path d="M-1 -4 Q1 2 -1 8" stroke="#f0a8c8" stroke-width="2.6" fill="none"/><circle cx="-6" cy="-1" r="2.6" fill="#2cc02c" stroke="#1a8a1a" stroke-width="0.4"/><circle cx="-3" cy="-4" r="2.6" fill="#2cc02c" stroke="#1a8a1a" stroke-width="0.4"/><circle cx="-5" cy="3" r="2.6" fill="#2cc02c" stroke="#1a8a1a" stroke-width="0.4"/><circle cx="-1" cy="-6" r="2.6" fill="#2cc02c" stroke="#1a8a1a" stroke-width="0.4"/><circle cx="3" cy="-3" r="2.6" fill="#2cc02c" stroke="#1a8a1a" stroke-width="0.4"/><circle cx="5" cy="0" r="2.6" fill="#2cc02c" stroke="#1a8a1a" stroke-width="0.4"/><circle cx="3" cy="4" r="2.6" fill="#2cc02c" stroke="#1a8a1a" stroke-width="0.4"/></g><g transform="translate(44.1,11.8)"><path d="M-11 0 L0 -7 L12 0 L1 7Z" fill="#fff" stroke="#e8a070" stroke-width="1.6" stroke-dasharray="1.5 0.8"/><path d="M-7 0 L0 -4.5 L8 0 L1 4.5Z" fill="#d8f4f8"/><path d="M2 2 A3.5 3 0 0 1 6 -2" fill="none" stroke="#9ad" stroke-width="0.8"/></g><g transform="translate(73.5,11.8)"><path d="M-7 0 L0 -6 L7 0 V8 H-7Z" fill="#fafafa" stroke="#888" stroke-width="0.6"/><path d="M-8 0 L-2 -8 L3 -7 L8 -1" fill="#f0b880" stroke="#c08050" stroke-width="0.7"/><rect x="-4.5" y="2" width="1.5" height="3" fill="#333"/><rect x="-1.5" y="2" width="1.5" height="3" fill="#333"/><rect x="3" y="3" width="2" height="5" fill="#333"/></g><g transform="translate(102.9,11.8)"><circle cx="1" cy="-3.5" r="5" fill="#e84a4a"/><path d="M-10 1 L-5 -2 L3 -1 L3 5 L-2 8 L-10 6Z" fill="#3a78e8" stroke="#2a5ab0" stroke-width="0.5"/><path d="M4 -4 L10 7 Q4 9 -1 7Z" fill="#3cc84c" stroke="#28983a" stroke-width="0.5"/></g><g transform="translate(14.7,35.4)"><circle cx="1.5" cy="-2.5" r="6.5" fill="#f4e040" stroke="#c0a020" stroke-width="0.7"/><circle cx="3" cy="-5" r="2" fill="#fffbd0"/><path d="M-5 3 L-2 6 L-6 9 L-9 6Z" fill="#666" stroke="#333" stroke-width="0.6"/></g><g transform="translate(44.1,35.4)"><path d="M-8 -5 L0 -8 L8 -5 V6 L0 9 L-8 6Z" fill="#c89060" stroke="#8a5a30" stroke-width="0.6"/><path d="M-8 -5 L0 -2 L8 -5" fill="none" stroke="#8a5a30" stroke-width="0.6"/><path d="M1 0 L8 -3 L9 2 L2 5Z" fill="#d8a070" stroke="#7a4a20" stroke-width="0.6"/><path d="M1 -1 L8 -4" stroke="#222" stroke-width="1.2"/></g><g transform="translate(73.5,35.4)"><path d="M-10 7 L4 -7 L7 -4 L-7 10Z" fill="#f4f4f4" stroke="#888" stroke-width="0.6"/><path d="M-2 7 L8 -4" stroke="#7a80e8" stroke-width="2.8"/><path d="M-2 7 L-3 9 L-1 8Z" fill="#333"/><circle cx="8.5" cy="-4.5" r="1.3" fill="#d03030"/></g><g transform="translate(102.9,35.4)"><path d="M-10 -6 L-4 -9 L11 -3 L5 0Z" fill="#e8e8e8" stroke="#888" stroke-width="0.6"/><path d="M-10 6 L-4 3 L11 9 L5 12Z" fill="#e0e0e0" stroke="#888" stroke-width="0.6"/><path d="M-7 -7 V4 L8 10 V-1Z" fill="#c8c8c8" stroke="#999" stroke-width="0.5"/><path d="M5 -1 V11 M2 -1 H9 M2 10 H9" stroke="#222" stroke-width="1.2"/></g><g transform="translate(14.7,59.0)"><path d="M-7.5 4 L5 -6" stroke="#3a88c8" stroke-width="6.2" stroke-linecap="round"/><path d="M-7.5 4 L5 -6" stroke="#90c8f0" stroke-width="4.8" stroke-linecap="round"/><path d="M0 -1 L8 4" stroke="#3a88c8" stroke-width="6.2" stroke-linecap="round"/><path d="M0 -1 L8 4" stroke="#90c8f0" stroke-width="4.8" stroke-linecap="round"/><path d="M-7.5 4 L5 -6" stroke="#90c8f0" stroke-width="4.8" stroke-linecap="round" opacity="0.6"/></g><g transform="translate(44.1,59.0)"><circle cx="-3" cy="-3" r="4.5" fill="#888" stroke="#444" stroke-width="0.7"/><circle cx="-3" cy="-3" r="2" fill="#ddd"/><circle cx="3.5" cy="3.5" r="4.5" fill="#bbb" stroke="#555" stroke-width="0.7"/><circle cx="2.5" cy="2.5" r="1.8" fill="#f4f4f4"/></g><g transform="translate(73.5,59.0)"><path d="M8.4 -0.9 L8.4 1.9 L6.2 1.5 L5.5 3.4 L7.4 4.5 L5.6 6.7 L4.3 4.9 L2.5 6.0 L3.3 8.0 L0.5 8.5 L0.5 6.3 L-1.5 5.9 L-2.2 8.0 L-4.7 6.6 L-3.2 5.0 L-4.5 3.4 L-6.4 4.5 L-7.4 1.8 L-5.2 1.5 L-5.2 -0.5 L-7.4 -0.8 L-6.4 -3.5 L-4.5 -2.4 L-3.2 -4.0 L-4.7 -5.6 L-2.2 -7.0 L-1.5 -4.9 L0.5 -5.3 L0.5 -7.5 L3.3 -7.0 L2.5 -5.0 L4.3 -3.9 L5.6 -5.7 L7.4 -3.5 L5.5 -2.4 L6.2 -0.5Z" fill="#c8c8c8" stroke="#888" stroke-width="0.6"/><circle cx="0.5" cy="0.5" r="2" fill="#f0f0f0" stroke="#999" stroke-width="0.5"/></g></svg>
<div class="a" style="left:103px;top:1050px;width:17px;height:7px;background:#f4f4f4;border:1px solid #bbb"></div>
<svg class="a" style="left:107px;top:1051px" width="10" height="6"><path d="M2 1.5 H8 L5 4.5Z" fill="#111"/></svg>
<div class="a" style="left:172px;top:580px;width:6px;height:6px;border-radius:50%;background:#d0d0d0;border:1px solid #c0c0c0"></div>
<div class="a" style="left:1682px;top:109px;width:185px;height:950px;background:#ececec"></div>
<div class="a" style="left:1683px;top:580px;width:6px;height:6px;border-radius:50%;background:#d0d0d0;border:1px solid #c0c0c0"></div>
<div class="ph" style="left:1690px;top:109px;width:177px;height:14px">Obj Info<div class="cl"></div></div>
<div class="a" style="left:1690px;top:123px;width:177px;height:286px;background:#e9e9e9;border-left:1px solid #b0b0b0"></div>
<div class="a" style="left:1691px;top:123px;width:176px;height:11px;background:#eeeeee"></div>
<div class="a" style="left:1691px;top:134px;width:176px;height:27px;background:#e3e3e3;border-bottom:1px solid #d8d8d8"></div>
<div class="a" style="left:1714px;top:127px;width:129px;height:13px;background:#fff;border-radius:3px;box-shadow:0 0 0 0.6px #c0c0c0,0 0.6px 1px rgba(0,0,0,.15)"></div>
<div class="a" style="left:1714px;top:127px;width:46px;height:13px;background:linear-gradient(#6cb3fa,#1f7ff4);border-radius:3px 0 0 3px;color:#fff;font-size:9.5px;line-height:13px;text-align:center">Shape</div>
<div class="a" style="left:1760px;top:127px;width:35px;height:13px;border-right:1px solid #ddd;font-size:9.5px;line-height:13px;text-align:center;color:#111">Data</div>
<div class="a" style="left:1795px;top:127px;width:48px;height:13px;font-size:9.5px;line-height:13px;text-align:center;color:#111">Render</div>
<div class="a" style="left:1856px;top:125px;width:9px;height:9px;background:#f4f4f4;border:1px solid #c8c8c8"></div>
<svg class="a" style="left:1857px;top:126px" width="8" height="8"><path d="M2.5 1.5 L5.5 4 L2.5 6.5Z" fill="#111"/></svg>
<div class="a" style="left:1692px;top:148px;font-size:10px;font-weight:bold;color:#111">No Selection</div>
<div class="a" style="left:1690px;top:406px;width:177px;height:4px;background:#dcdcdc;border-top:1px solid #a8a8a8;border-bottom:1px solid #a8a8a8"></div>
<div class="ph" style="left:1690px;top:416px;width:177px;height:14px">Navigation - Saved Views<div class="cl"></div></div>
<div class="a" style="left:1690px;top:430px;width:177px;height:258px;background:#e9e9e9;border-left:1px solid #b0b0b0"></div>
<div class="a" style="left:1849px;top:431px;width:11px;height:9px;background:#f0f0f0;border:1px solid #ccc"></div>
<div class="a" style="left:1699px;top:436px;width:159px;height:15px;background:#fff;border-radius:3px;box-shadow:0 0 0 0.6px #c0c0c0,0 0.6px 1px rgba(0,0,0,.15)"></div>
<div class="a" style="left:1804px;top:436px;width:27px;height:15px;background:linear-gradient(#6cb3fa,#1f7ff4)"></div>
<div class="a" style="left:1725.5px;top:437px;width:1px;height:13px;background:#d8d8d8"></div>
<div class="a" style="left:1752.0px;top:437px;width:1px;height:13px;background:#d8d8d8"></div>
<div class="a" style="left:1778.5px;top:437px;width:1px;height:13px;background:#d8d8d8"></div>
<div class="a" style="left:1805.0px;top:437px;width:1px;height:13px;background:#d8d8d8"></div>
<div class="a" style="left:1831.5px;top:437px;width:1px;height:13px;background:#d8d8d8"></div>
<svg class="a" style="left:1699px;top:436px" width="160" height="15"><g fill="none" stroke="#444" stroke-width="0.8">
<rect x="8" y="6.5" width="2" height="2.5"/><rect x="11.5" y="5" width="2" height="2.5"/><rect x="11.5" y="9" width="2" height="2.5"/><rect x="15" y="2.5" width="2" height="2.5"/><rect x="15" y="6.5" width="2" height="2.5"/><path d="M10 7.7 H11.5 M13.5 6.2 H15 M13.5 10.2 H14 M16 5 V6.5"/>
</g><g stroke="#666" fill="#aaa" stroke-width="0.6"><path d="M35 10 L40 7.5 L45 10 L40 12.5Z"/><path d="M35 7.5 L40 5 L45 7.5 L40 10Z"/><path d="M35 5 L40 2.5 L45 5 L40 7.5Z"/></g>
<g fill="none" stroke="#333" stroke-width="0.9"><rect x="61.5" y="2.5" width="10" height="10" fill="#f4f4f4"/><rect x="66" y="8.5" width="4" height="2" fill="#fff"/>
<path d="M87 4 V2.5 H90 M95 2.5 H98 V4 M87 11 V12.5 H90 M95 12.5 H98 V11"/><path d="M88 11 L90 7 L92 9 L94 6 L97 11Z" fill="#a8b0f0" stroke="none"/>
<path d="M115 2 H120.5 L123 4.5 V13 H115Z" fill="#fff" stroke="#222"/><path d="M115.5 12.5 V9 L117.5 7 L119.5 9 L122.5 7 V12.5Z" fill="#a8b0f0" stroke="none"/>
<path d="M143 2 H148.5 L151 4.5 V13 H143Z" fill="#fff" stroke="#222"/><path d="M137 11 L141.5 6.5 M139 6 H142 V9" stroke="#111" stroke-width="1.4"/></g></svg>
<div class="a" style="left:1691px;top:458px;width:171px;height:230px;background:#fff;border:1px solid #c8c8c8"></div>
<div class="a" style="left:1691px;top:473px;width:171px;height:1px;background:#e0e0e0"></div>
<div class="a" style="left:1695px;top:461px;font-size:9px;color:#111">Saved View Name</div>
<svg class="a" style="left:1836px;top:461px" width="10" height="10"><path d="M2 6 L5 3 L8 6" fill="none" stroke="#333" stroke-width="1.1"/></svg>
<div class="a" style="left:1850px;top:460px;width:1px;height:12px;background:#ccc"></div>
<div class="a" style="left:1854px;top:461px;font-size:9px;color:#111">Vi</div>
<div class="a" style="left:1694px;top:475px;font-size:9px;color:#111">3D Check</div>
<div class="a" style="left:1694px;top:678px;width:167px;height:9px;background:#fafafa;border-top:1px solid #eee"></div>
<div class="a" style="left:1694px;top:680px;width:125px;height:5px;background:#c2c2c2;border-radius:3px"></div>
<div class="a" style="left:1690px;top:688px;width:177px;height:5px;background:#dcdcdc;border-top:1px solid #a8a8a8"></div>
<div class="ph" style="left:1690px;top:694px;width:177px;height:14px">Resource Browser<div class="cl"></div></div>
<div class="a" style="left:1690px;top:708px;width:177px;height:351px;background:#e9e9e9;border-left:1px solid #b0b0b0"></div>
<div class="a" style="left:1693px;top:711px;font-size:9px;font-weight:bold;color:#111">Files</div>
<div class="a" style="left:1715px;top:716px;width:123px;height:1px;background:#d0d0d0"></div>
<div class="a" style="left:1693px;top:743px;font-size:9px;font-weight:bold;color:#111">Resources</div>
<div class="a" style="left:1745px;top:748px;width:93px;height:1px;background:#d0d0d0"></div>
<div class="a" style="left:1845px;top:710px;width:17px;height:12px;background:#f6f6f6;border:1px solid #c4c4c4;border-radius:2px"></div>
<svg class="a" style="left:1848px;top:712px" width="11" height="8"><path d="M2 2 L5.5 5.5 L9 2" fill="none" stroke="#111" stroke-width="1.2"/></svg>
<div class="a" style="left:1845px;top:742px;width:17px;height:12px;background:#f6f6f6;border:1px solid #c4c4c4;border-radius:2px"></div>
<svg class="a" style="left:1848px;top:744px" width="11" height="8"><path d="M2 2 L5.5 5.5 L9 2" fill="none" stroke="#111" stroke-width="1.2"/></svg>
<svg class="a" style="left:1702px;top:724px" width="16" height="16"><path d="M2 2 H10 L13 5 V14 H2Z" fill="#ee5533" stroke="#b03010" stroke-width="0.6"/><circle cx="7.5" cy="8.5" r="3" fill="none" stroke="#fff" stroke-width="0.9"/></svg>
<svg class="a" style="left:1702px;top:757px" width="16" height="14"><path d="M2 4 H6 L7 3 H13 V12 H2Z" fill="#f0e8d8" stroke="#666" stroke-width="0.8"/></svg>
<div class="a" style="left:1726px;top:725px;width:107px;height:13px;background:#fff;border-radius:3px;box-shadow:0 0 0 0.6px #c0c0c0,0 0.6px 1px rgba(0,0,0,.15)"></div>
<svg class="a" style="left:1735px;top:726px" width="12" height="12"><path d="M2 1 H8 L10 3 V11 H2Z" fill="#ee5533"/></svg>
<div class="a" style="left:1751px;top:726px;font-size:9.5px;color:#111">Untitled 1</div>
<div class="a" style="left:1821px;top:725px;width:12px;height:13px;border-radius:0 3px 3px 0;background:linear-gradient(#6cb3fa,#1f7ff4)"></div>
<svg class="a" style="left:1821px;top:726px" width="12" height="11"><path d="M3.5 4.5 L6 2 L8.5 4.5 M3.5 6.5 L6 9 L8.5 6.5" fill="none" stroke="#fff" stroke-width="1.1"/></svg>
<div class="a" style="left:1726px;top:757px;width:107px;height:13px;background:#fff;border-radius:3px;box-shadow:0 0 0 0.6px #c0c0c0,0 0.6px 1px rgba(0,0,0,.15)"></div>
<svg class="a" style="left:1735px;top:758px" width="12" height="12"><path d="M1 3 H5 L6 2 H11 V10 H1Z" fill="#f0e8d8" stroke="#666" stroke-width="0.7"/></svg>
<div class="a" style="left:1751px;top:758px;font-size:9.5px;color:#111">Top Level</div>
<div class="a" style="left:1821px;top:757px;width:12px;height:13px;border-radius:0 3px 3px 0;background:linear-gradient(#6cb3fa,#1f7ff4)"></div>
<svg class="a" style="left:1821px;top:758px" width="12" height="11"><path d="M3.5 4.5 L6 2 L8.5 4.5 M3.5 6.5 L6 9 L8.5 6.5" fill="none" stroke="#fff" stroke-width="1.1"/></svg>
<div class="a" style="left:1845px;top:724px;width:17px;height:15px;background:#f6f6f6;border:1px solid #c4c4c4;border-radius:2px"></div>
<svg class="a" style="left:1847px;top:725px" width="13" height="13"><path d="M2 7 L6.5 2.5 L11 7 M3.5 6 V11 H9.5 V6" fill="none" stroke="#c02010" stroke-width="1.3"/></svg>
<div class="a" style="left:1845px;top:756px;width:17px;height:15px;background:#e8e8e8;border:1px solid #c4c4c4;border-radius:2px"></div>
<svg class="a" style="left:1847px;top:757px" width="13" height="13"><path d="M2 5 H5 L6 4 H11 V11 H2Z" fill="#f0e8d8" stroke="#777" stroke-width="0.7"/><path d="M6.5 9 V5 M4.5 7 L6.5 5 L8.5 7" stroke="#2a9a2a" fill="none"/></svg>
<div class="a" style="left:1694px;top:776px;width:169px;height:257px;background:#fff;border:1px solid #c8c8c8"></div>
<div class="a" style="left:1694px;top:1036px;width:19px;height:20px;background:#eaeaea;border:1px solid #c8c8c8"></div>
<svg class="a" style="left:1696px;top:1039px" width="15" height="14"><path d="M3 5 L7 2 L12 4 L12 10 L7 12 L3 10Z" fill="#dcd8f8" stroke="#a08060" stroke-width="0.8"/></svg>
<div class="a" style="left:1719px;top:1041px;font-size:9.5px;font-weight:bold;color:#111">No Active Symbol</div>
<svg class="a" style="left:0;top:0" width="1920" height="1149" viewBox="0 0 1920 1149">
<defs>
<linearGradient id="g_pur" x1="0" y1="0" x2="0" y2="1"><stop offset="0" stop-color="#dcd6f2"/><stop offset="0.27" stop-color="#f6f4ff"/><stop offset="0.47" stop-color="#b4aadc"/><stop offset="0.5" stop-color="#9a8fcf"/><stop offset="1" stop-color="#9386c8"/></linearGradient>
<linearGradient id="t_pur" x1="0" y1="0" x2="0" y2="1"><stop offset="0" stop-color="#dcd6f2"/><stop offset="0.17" stop-color="#f6f4ff"/><stop offset="0.44" stop-color="#b4aadc"/><stop offset="0.47" stop-color="#9a8fcf"/><stop offset="1" stop-color="#9386c8"/></linearGradient>
<linearGradient id="g_brz" x1="0" y1="0" x2="0" y2="1"><stop offset="0" stop-color="#efe2c0"/><stop offset="0.27" stop-color="#fffcf4"/><stop offset="0.47" stop-color="#cfab55"/><stop offset="0.5" stop-color="#b98a0b"/><stop offset="1" stop-color="#b28505"/></linearGradient>
<linearGradient id="t_brz" x1="0" y1="0" x2="0" y2="1"><stop offset="0" stop-color="#efe2c0"/><stop offset="0.17" stop-color="#fffcf4"/><stop offset="0.44" stop-color="#cfab55"/><stop offset="0.47" stop-color="#b98a0b"/><stop offset="1" stop-color="#b28505"/></linearGradient>
<linearGradient id="g_red" x1="0" y1="0" x2="0" y2="1"><stop offset="0" stop-color="#ffcccc"/><stop offset="0.27" stop-color="#fff2f2"/><stop offset="0.47" stop-color="#ff9a9a"/><stop offset="0.5" stop-color="#ff6c6c"/><stop offset="1" stop-color="#ff6262"/></linearGradient>
<linearGradient id="t_red" x1="0" y1="0" x2="0" y2="1"><stop offset="0" stop-color="#ffcccc"/><stop offset="0.17" stop-color="#fff2f2"/><stop offset="0.44" stop-color="#ff9a9a"/><stop offset="0.47" stop-color="#ff6c6c"/><stop offset="1" stop-color="#ff6262"/></linearGradient>
<linearGradient id="g_blu" x1="0" y1="0" x2="0" y2="1"><stop offset="0" stop-color="#cce8ff"/><stop offset="0.27" stop-color="#f2faff"/><stop offset="0.47" stop-color="#9ed6ff"/><stop offset="0.5" stop-color="#64c1ff"/><stop offset="1" stop-color="#5cbcff"/></linearGradient>
<linearGradient id="t_blu" x1="0" y1="0" x2="0" y2="1"><stop offset="0" stop-color="#cce8ff"/><stop offset="0.17" stop-color="#f2faff"/><stop offset="0.44" stop-color="#9ed6ff"/><stop offset="0.47" stop-color="#64c1ff"/><stop offset="1" stop-color="#5cbcff"/></linearGradient>
<linearGradient id="g_mag" x1="0" y1="0" x2="0" y2="1"><stop offset="0" stop-color="#ffd0ff"/><stop offset="0.27" stop-color="#fff2ff"/><stop offset="0.47" stop-color="#ffaaff"/><stop offset="0.5" stop-color="#ff86ff"/><stop offset="1" stop-color="#ff80ff"/></linearGradient>
<linearGradient id="t_mag" x1="0" y1="0" x2="0" y2="1"><stop offset="0" stop-color="#ffd0ff"/><stop offset="0.17" stop-color="#fff2ff"/><stop offset="0.44" stop-color="#ffaaff"/><stop offset="0.47" stop-color="#ff86ff"/><stop offset="1" stop-color="#ff80ff"/></linearGradient>
<linearGradient id="g_gry" x1="0" y1="0" x2="0" y2="1"><stop offset="0" stop-color="#ece9e6"/><stop offset="0.27" stop-color="#fbfbfa"/><stop offset="0.47" stop-color="#dcd6d1"/><stop offset="0.5" stop-color="#cfc8c2"/><stop offset="1" stop-color="#ccc5bf"/></linearGradient>
<linearGradient id="t_gry" x1="0" y1="0" x2="0" y2="1"><stop offset="0" stop-color="#ece9e6"/><stop offset="0.17" stop-color="#fbfbfa"/><stop offset="0.44" stop-color="#dcd6d1"/><stop offset="0.47" stop-color="#cfc8c2"/><stop offset="1" stop-color="#ccc5bf"/></linearGradient>
<linearGradient id="g_yel" x1="0" y1="0" x2="0" y2="1"><stop offset="0" stop-color="#f4e2b0"/><stop offset="0.27" stop-color="#fff8ea"/><stop offset="0.47" stop-color="#f0c850"/><stop offset="0.5" stop-color="#e8b100"/><stop offset="1" stop-color="#e6ae00"/></linearGradient>
<linearGradient id="t_yel" x1="0" y1="0" x2="0" y2="1"><stop offset="0" stop-color="#f4e2b0"/><stop offset="0.17" stop-color="#fff8ea"/><stop offset="0.44" stop-color="#f0c850"/><stop offset="0.47" stop-color="#e8b100"/><stop offset="1" stop-color="#e6ae00"/></linearGradient>
<linearGradient id="g_tea" x1="0" y1="0" x2="0" y2="1"><stop offset="0" stop-color="#d6ffff"/><stop offset="0.27" stop-color="#f4ffff"/><stop offset="0.47" stop-color="#a6e2e8"/><stop offset="0.5" stop-color="#7ccad2"/><stop offset="1" stop-color="#74c4cc"/></linearGradient>
<linearGradient id="t_tea" x1="0" y1="0" x2="0" y2="1"><stop offset="0" stop-color="#d6ffff"/><stop offset="0.17" stop-color="#f4ffff"/><stop offset="0.44" stop-color="#a6e2e8"/><stop offset="0.47" stop-color="#7ccad2"/><stop offset="1" stop-color="#74c4cc"/></linearGradient>
<linearGradient id="g_wht" x1="0" y1="0" x2="0" y2="1"><stop offset="0" stop-color="#ffffff"/><stop offset="0.27" stop-color="#ffffff"/><stop offset="0.47" stop-color="#ffffff"/><stop offset="0.5" stop-color="#ffffff"/><stop offset="1" stop-color="#ffffff"/></linearGradient>
<linearGradient id="t_wht" x1="0" y1="0" x2="0" y2="1"><stop offset="0" stop-color="#ffffff"/><stop offset="0.17" stop-color="#ffffff"/><stop offset="0.44" stop-color="#ffffff"/><stop offset="0.47" stop-color="#ffffff"/><stop offset="1" stop-color="#ffffff"/></linearGradient>
<linearGradient id="g_ac1" x1="0" y1="0" x2="0" y2="1"><stop offset="0" stop-color="#d8ffd8"/><stop offset="0.27" stop-color="#e8ffe8"/><stop offset="0.47" stop-color="#c8fcc8"/><stop offset="0.5" stop-color="#c0f8c0"/><stop offset="1" stop-color="#bdf5bd"/></linearGradient>
<linearGradient id="t_ac1" x1="0" y1="0" x2="0" y2="1"><stop offset="0" stop-color="#d8ffd8"/><stop offset="0.17" stop-color="#e8ffe8"/><stop offset="0.44" stop-color="#c8fcc8"/><stop offset="0.47" stop-color="#c0f8c0"/><stop offset="1" stop-color="#bdf5bd"/></linearGradient>
<linearGradient id="g_ac2" x1="0" y1="0" x2="0" y2="1"><stop offset="0" stop-color="#b0ffff"/><stop offset="0.27" stop-color="#c0ffff"/><stop offset="0.47" stop-color="#98ffff"/><stop offset="0.5" stop-color="#90fcfc"/><stop offset="1" stop-color="#8cf8f8"/></linearGradient>
<linearGradient id="t_ac2" x1="0" y1="0" x2="0" y2="1"><stop offset="0" stop-color="#b0ffff"/><stop offset="0.17" stop-color="#c0ffff"/><stop offset="0.44" stop-color="#98ffff"/><stop offset="0.47" stop-color="#90fcfc"/><stop offset="1" stop-color="#8cf8f8"/></linearGradient>
<linearGradient id="g_ac3" x1="0" y1="0" x2="0" y2="1"><stop offset="0" stop-color="#dcc8ff"/><stop offset="0.27" stop-color="#e4d4ff"/><stop offset="0.47" stop-color="#ccb0ff"/><stop offset="0.5" stop-color="#c6a8ff"/><stop offset="1" stop-color="#c2a2fc"/></linearGradient>
<linearGradient id="t_ac3" x1="0" y1="0" x2="0" y2="1"><stop offset="0" stop-color="#dcc8ff"/><stop offset="0.17" stop-color="#e4d4ff"/><stop offset="0.44" stop-color="#ccb0ff"/><stop offset="0.47" stop-color="#c6a8ff"/><stop offset="1" stop-color="#c2a2fc"/></linearGradient>
<linearGradient id="g_ac4" x1="0" y1="0" x2="0" y2="1"><stop offset="0" stop-color="#ff40ff"/><stop offset="0.27" stop-color="#ff50ff"/><stop offset="0.47" stop-color="#ff10ff"/><stop offset="0.5" stop-color="#ff00ff"/><stop offset="1" stop-color="#fa00fa"/></linearGradient>
<linearGradient id="t_ac4" x1="0" y1="0" x2="0" y2="1"><stop offset="0" stop-color="#ff40ff"/><stop offset="0.17" stop-color="#ff50ff"/><stop offset="0.44" stop-color="#ff10ff"/><stop offset="0.47" stop-color="#ff00ff"/><stop offset="1" stop-color="#fa00fa"/></linearGradient>
<clipPath id="cvclip"><rect x="195" y="125" width="1487" height="934"/></clipPath>
</defs><g clip-path="url(#cvclip)">
<path d="M891 310 V304 H897 M910 304 H916.5 V310 M916.5 323 V329.5 H910 M897 329.5 H891 V323" stroke="#e6e6e6" stroke-width="1.1" fill="none"/><rect x="899" y="311.5" width="10" height="10" fill="none" stroke="#e6e6e6" stroke-width="1.1"/>
<path d="M698.8 660.6 C710.8 660.6 710.0 650.5 722.0 650.5 M698.8 660.6 C719.4 660.6 719.4 672.0 740.0 672.0 M698.8 660.6 C848.7 660.6 848.7 658.1 998.6 658.1 M698.8 710.5 C710.8 710.5 708.4 721.9 720.4 721.9 M698.8 729.4 C710.8 729.4 708.4 734.6 720.4 734.6 M698.8 749.5 C710.8 749.5 708.4 747.6 720.4 747.6 M698.8 768.4 C710.8 768.4 708.4 760.0 720.4 760.0 M1236.7 430.2 C1367.5 430.2 1367.5 517.3 1498.3 517.3 M1236.7 430.2 C1369.2 430.2 1369.2 541.0 1501.6 541.0" fill="none" stroke="#6a6a6a" stroke-width="0.9"/>
<path d="M291.0 634.4 C305.0 634.4 305.0 643.4 319.0 643.4 M286.0 654.0 C302.5 654.0 302.5 655.8 319.0 655.8 M288.0 675.0 C303.5 675.0 303.5 668.4 319.0 668.4 M355.0 655.8 C367.5 655.8 367.5 655.5 380.0 655.5 M438.4 649.2 C452.0 649.2 452.0 647.3 465.6 647.3 M576.0 647.3 C606.0 647.3 606.0 622.0 636.0 622.0 M576.0 647.3 C590.8 647.3 590.8 648.4 605.5 648.4 M570.3 668.8 C587.9 668.8 587.9 660.6 605.5 660.6 M570.3 691.1 C587.9 691.1 587.9 673.1 605.5 673.1 M570.3 668.8 C811.5 668.8 811.5 783.0 1052.7 783.0 M570.3 691.1 C811.8 691.1 811.8 834.5 1053.3 834.5 M829.7 650.5 C905.9 650.5 905.9 565.6 982.0 565.6 M829.7 650.5 C841.7 650.5 839.0 715.1 851.0 715.1 M755.5 741.0 C767.5 741.0 761.2 741.0 773.2 741.0 M817.8 728.6 C834.4 728.6 834.4 727.5 851.0 727.5 M817.8 741.2 C834.4 741.2 834.4 740.1 851.0 740.1 M817.8 753.8 C834.4 753.8 834.4 752.5 851.0 752.5 M937.0 733.4 C967.8 733.4 967.8 671.2 998.6 671.2 M1081.5 696.1 C1164.0 696.1 1164.0 830.5 1246.5 830.5 M1101.5 417.7 C1113.5 417.7 1111.4 417.7 1123.4 417.7 M1097.0 442.7 C1110.2 442.7 1110.2 442.7 1123.4 442.7 M1069.0 565.6 C1096.2 565.6 1096.2 430.2 1123.4 430.2 M1147.0 466.5 C1159.0 466.5 1153.6 466.7 1165.6 466.7 M1147.0 491.6 C1159.0 491.6 1153.6 491.9 1165.6 491.9 M1069.0 565.6 C1165.0 565.6 1165.0 570.0 1261.0 570.0 M1069.0 565.6 C1165.0 565.6 1165.0 609.8 1261.0 609.8 M1069.0 565.6 C1165.0 565.6 1165.0 642.3 1261.0 642.3 M1236.0 479.4 C1248.5 479.4 1248.5 508.6 1261.0 508.6 M1235.0 511.2 C1248.0 511.2 1248.0 521.6 1261.0 521.6 M1236.0 479.4 C1300.8 479.4 1300.8 676.3 1365.5 676.3 M1308.6 483.6 C1329.5 483.6 1329.5 461.3 1350.5 461.3 M1308.6 483.6 C1329.5 483.6 1329.5 486.5 1350.5 486.5 M1308.6 483.6 C1329.5 483.6 1329.5 511.7 1350.5 511.7 M1290.0 515.2 C1320.2 515.2 1320.2 473.9 1350.5 473.9 M1290.0 515.2 C1320.2 515.2 1320.2 499.1 1350.5 499.1 M1290.0 515.2 C1320.2 515.2 1320.2 524.3 1350.5 524.3 M1430.0 492.5 C1465.8 492.5 1465.8 553.2 1501.6 553.2 M1430.0 492.5 C1465.8 492.5 1465.8 578.2 1501.6 578.2 M1436.0 591.9 C1468.8 591.9 1468.8 565.8 1501.6 565.8 M1436.0 591.9 C1468.8 591.9 1468.8 590.8 1501.6 590.8 M1422.8 695.0 C1462.2 695.0 1462.2 603.1 1501.6 603.1 M1236.7 542.3 C1248.8 542.3 1248.8 557.0 1261.0 557.0 M1236.7 542.3 C1291.7 542.3 1291.7 561.0 1346.6 561.0 M1313.3 563.4 C1329.9 563.4 1329.9 573.5 1346.6 573.5 M1238.0 586.7 C1292.3 586.7 1292.3 586.1 1346.6 586.1 M1238.0 586.7 C1250.0 586.7 1249.0 597.0 1261.0 597.0 M1313.3 603.6 C1329.9 603.6 1329.9 598.6 1346.6 598.6 M1234.7 627.5 C1247.8 627.5 1247.8 629.8 1261.0 629.8 M1234.7 627.5 C1290.7 627.5 1290.7 611.1 1346.6 611.1 M1313.3 636.1 C1329.9 636.1 1329.9 623.6 1346.6 623.6 M1339.7 663.7 C1352.6 663.7 1352.6 663.8 1365.5 663.8 M1334.5 691.2 C1350.0 691.2 1350.0 688.9 1365.5 688.9 M1330.3 720.6 C1347.9 720.6 1347.9 714.0 1365.5 714.0 M1035.0 809.3 C1047.0 809.3 1040.7 795.6 1052.7 795.6 M1035.0 809.3 C1047.0 809.3 1041.3 846.8 1053.3 846.8 M1081.6 766.1 C1095.1 766.1 1095.1 766.9 1108.6 766.9 M1081.6 789.3 C1095.1 789.3 1095.1 779.2 1108.6 779.2 M1081.9 817.9 C1096.8 817.9 1096.8 825.0 1111.7 825.0 M1082.0 840.8 C1096.8 840.8 1096.8 837.6 1111.7 837.6 M1158.7 766.7 C1176.7 766.7 1176.7 788.6 1194.7 788.6 M1161.8 825.0 C1178.2 825.0 1178.2 801.3 1194.7 801.3 M1257.3 788.6 C1269.5 788.6 1269.5 789.8 1281.8 789.8 M1257.3 801.3 C1269.5 801.3 1269.5 802.4 1281.8 802.4 M1327.6 802.2 C1346.7 802.2 1346.7 802.1 1365.7 802.1 M1329.0 830.5 C1347.3 830.5 1347.3 814.5 1365.7 814.5 M1430.5 802.1 C1442.5 802.1 1439.7 801.5 1451.7 801.5 M1430.5 814.5 C1442.5 814.5 1439.7 814.1 1451.7 814.1 M1480.5 807.8 C1493.6 807.8 1493.6 807.2 1506.7 807.2" fill="none" stroke="#111" stroke-width="1.7"/>
<rect x="232.0" y="625.0" width="59.0" height="18.0" rx="3.5" fill="url(#g_pur)" stroke="#111" stroke-width="1.6"/>
<rect x="231.0" y="645.5" width="55.0" height="17.5" rx="3.5" fill="url(#g_pur)" stroke="#111" stroke-width="1.6"/>
<rect x="233.0" y="666.0" width="55.0" height="18.0" rx="3.5" fill="url(#g_pur)" stroke="#111" stroke-width="1.6"/>
<rect x="319.0" y="637.0" width="36.0" height="38.0" rx="4" fill="url(#g_brz)" stroke="#111" stroke-width="1.6"/>
<path d="M319.0 643.4 V668.4" stroke="#111" stroke-width="1.4"/>
<rect x="380.0" y="636.0" width="58.4" height="25.7" rx="4" fill="url(#g_red)" stroke="#111" stroke-width="1.6"/>
<path d="M380.0 642.5 V655.5" stroke="#111" stroke-width="1.4"/>
<rect x="465.6" y="641.0" width="110.4" height="12.6" rx="3.5" fill="url(#g_blu)" stroke="#111" stroke-width="1.6"/>
<rect x="636.0" y="615.3" width="45.0" height="13.3" rx="3.5" fill="url(#g_red)" stroke="#111" stroke-width="1.6"/>
<rect x="605.5" y="641.4" width="93.2" height="38.0" rx="4" fill="url(#g_mag)" stroke="#888" stroke-width="0.9"/>
<path d="M605.5 648.4 V673.1" stroke="#111" stroke-width="1.4"/>
<rect x="539.0" y="659.8" width="31.3" height="18.2" rx="3.5" fill="url(#g_pur)" stroke="#111" stroke-width="1.6"/>
<rect x="539.0" y="682.3" width="31.3" height="17.7" rx="3.5" fill="url(#g_pur)" stroke="#111" stroke-width="1.6"/>
<rect x="722.0" y="644.0" width="107.7" height="13.0" rx="3.5" fill="url(#g_mag)" stroke="#111" stroke-width="1.6"/>
<rect x="740.0" y="665.6" width="71.7" height="12.8" rx="3.5" fill="url(#g_mag)" stroke="#111" stroke-width="1.6"/>
<rect x="635.6" y="704.5" width="63.2" height="12.1" rx="3.5" fill="url(#g_ac1)" stroke="#999" stroke-width="0.9"/>
<rect x="635.6" y="723.3" width="63.2" height="12.2" rx="3.5" fill="url(#g_ac2)" stroke="#888" stroke-width="0.9"/>
<rect x="635.6" y="743.5" width="63.2" height="12.0" rx="3.5" fill="url(#g_ac3)" stroke="#888" stroke-width="0.9"/>
<rect x="635.6" y="762.2" width="63.2" height="12.4" rx="3.5" fill="url(#g_ac4)" stroke="#888" stroke-width="0.9"/>
<rect x="720.4" y="715.7" width="35.1" height="50.3" rx="4" fill="url(#t_brz)" stroke="#111" stroke-width="1.6"/>
<path d="M720.4 721.9 V760.0" stroke="#111" stroke-width="1.4"/>
<rect x="773.2" y="722.2" width="44.6" height="37.4" rx="4" fill="url(#g_gry)" stroke="#111" stroke-width="1.6"/>
<rect x="851.0" y="708.0" width="86.0" height="50.5" rx="4" fill="url(#t_mag)" stroke="#111" stroke-width="1.6"/>
<path d="M851.0 715.1 V752.5" stroke="#111" stroke-width="1.4"/>
<rect x="982.0" y="559.0" width="87.0" height="13.0" rx="3.5" fill="url(#g_brz)" stroke="#111" stroke-width="1.6"/>
<rect x="1065.6" y="411.0" width="35.9" height="13.0" rx="3.5" fill="url(#g_pur)" stroke="#111" stroke-width="1.6"/>
<rect x="1123.4" y="411.0" width="113.3" height="37.8" rx="4" fill="url(#g_wht)" stroke="#888" stroke-width="1.0"/>
<path d="M1123.4 417.7 V442.7" stroke="#777" stroke-width="1.4"/>
<rect x="1074.0" y="436.7" width="23.0" height="13.0" rx="3.5" fill="url(#g_pur)" stroke="#111" stroke-width="1.6"/>
<rect x="1125.0" y="460.0" width="22.0" height="12.7" rx="3.5" fill="url(#g_pur)" stroke="#111" stroke-width="1.6"/>
<rect x="1125.0" y="485.6" width="22.0" height="12.4" rx="3.5" fill="url(#g_pur)" stroke="#111" stroke-width="1.6"/>
<rect x="1165.6" y="460.0" width="70.4" height="38.0" rx="4" fill="url(#g_brz)" stroke="#111" stroke-width="1.6"/>
<path d="M1165.6 466.7 V491.9" stroke="#111" stroke-width="1.4"/>
<rect x="1257.8" y="474.0" width="50.8" height="18.0" rx="3.5" fill="url(#g_pur)" stroke="#111" stroke-width="1.6"/>
<rect x="1213.0" y="504.7" width="22.0" height="12.3" rx="3.5" fill="url(#g_pur)" stroke="#111" stroke-width="1.6"/>
<rect x="1261.0" y="502.0" width="29.0" height="25.3" rx="4" fill="url(#g_gry)" stroke="#111" stroke-width="1.6"/>
<path d="M1261.0 508.6 V521.6" stroke="#111" stroke-width="1.4"/>
<rect x="1155.5" y="532.8" width="81.2" height="18.2" rx="3.5" fill="url(#g_pur)" stroke="#111" stroke-width="1.6"/>
<rect x="1261.0" y="550.5" width="52.3" height="25.0" rx="4" fill="url(#g_brz)" stroke="#111" stroke-width="1.6"/>
<path d="M1261.0 557.0 V570.0" stroke="#111" stroke-width="1.4"/>
<rect x="1161.6" y="577.5" width="76.4" height="18.0" rx="3.5" fill="url(#g_pur)" stroke="#111" stroke-width="1.6"/>
<rect x="1261.0" y="591.0" width="52.3" height="24.6" rx="4" fill="url(#g_brz)" stroke="#111" stroke-width="1.6"/>
<path d="M1261.0 597.0 V609.8" stroke="#111" stroke-width="1.4"/>
<rect x="1162.8" y="618.4" width="71.9" height="17.6" rx="3.5" fill="url(#g_pur)" stroke="#111" stroke-width="1.6"/>
<rect x="1261.0" y="623.4" width="52.3" height="25.0" rx="4" fill="url(#g_brz)" stroke="#111" stroke-width="1.6"/>
<path d="M1261.0 629.8 V642.3" stroke="#111" stroke-width="1.4"/>
<rect x="1346.6" y="554.0" width="89.4" height="75.7" rx="4" fill="url(#t_brz)" stroke="#111" stroke-width="1.6"/>
<path d="M1346.6 561.0 V623.6" stroke="#111" stroke-width="1.4"/>
<rect x="1350.5" y="454.7" width="79.5" height="75.6" rx="4" fill="url(#t_brz)" stroke="#111" stroke-width="1.6"/>
<path d="M1350.5 461.3 V524.3" stroke="#111" stroke-width="1.4"/>
<path d="M1501.3 511.3 H1605.3 L1609.3 517.5 L1605.3 523.7 H1501.3 L1497.3 517.5Z" fill="#fff" stroke="#777" stroke-width="1"/>
<rect x="1501.6" y="534.3" width="106.1" height="75.1" rx="4" fill="url(#t_wht)" stroke="#888" stroke-width="1.0"/>
<path d="M1501.6 541.0 V603.1" stroke="#777" stroke-width="1.4"/>
<rect x="1258.3" y="654.7" width="81.4" height="18.0" rx="3.5" fill="url(#g_pur)" stroke="#111" stroke-width="1.6"/>
<rect x="1258.0" y="682.4" width="76.5" height="17.8" rx="3.5" fill="url(#g_pur)" stroke="#111" stroke-width="1.6"/>
<rect x="1258.0" y="711.6" width="72.3" height="17.8" rx="3.5" fill="url(#g_pur)" stroke="#111" stroke-width="1.6"/>
<rect x="1365.5" y="657.2" width="57.3" height="75.0" rx="4" fill="url(#t_brz)" stroke="#111" stroke-width="1.6"/>
<path d="M1365.5 663.8 V726.5" stroke="#111" stroke-width="1.4"/>
<rect x="998.6" y="652.0" width="82.9" height="88.3" rx="4" fill="url(#t_yel)" stroke="#111" stroke-width="1.6"/>
<path d="M998.6 658.1 V734.0" stroke="#111" stroke-width="1.4"/>
<rect x="1052.7" y="759.7" width="28.9" height="12.3" rx="3.5" fill="url(#g_pur)" stroke="#111" stroke-width="1.6"/>
<rect x="1052.7" y="776.7" width="28.9" height="24.6" rx="4" fill="url(#g_gry)" stroke="#111" stroke-width="1.6"/>
<path d="M1052.7 783.0 V795.6" stroke="#111" stroke-width="1.4"/>
<rect x="1013.0" y="803.3" width="22.0" height="12.3" rx="3.5" fill="url(#g_pur)" stroke="#111" stroke-width="1.6"/>
<rect x="1053.9" y="811.6" width="28.0" height="12.6" rx="3.5" fill="url(#g_pur)" stroke="#111" stroke-width="1.6"/>
<rect x="1053.3" y="828.2" width="28.7" height="25.0" rx="4" fill="url(#g_gry)" stroke="#111" stroke-width="1.6"/>
<path d="M1053.3 834.5 V846.8" stroke="#111" stroke-width="1.4"/>
<rect x="1108.6" y="747.8" width="50.1" height="37.5" rx="4" fill="url(#g_brz)" stroke="#111" stroke-width="1.6"/>
<path d="M1108.6 754.3 V779.2" stroke="#111" stroke-width="1.4"/>
<rect x="1111.7" y="806.5" width="50.1" height="37.2" rx="4" fill="url(#g_brz)" stroke="#111" stroke-width="1.6"/>
<path d="M1111.7 812.4 V837.6" stroke="#111" stroke-width="1.4"/>
<rect x="1194.7" y="782.0" width="62.6" height="25.2" rx="4" fill="url(#g_brz)" stroke="#111" stroke-width="1.6"/>
<path d="M1194.7 788.6 V801.3" stroke="#111" stroke-width="1.4"/>
<rect x="1281.8" y="783.5" width="45.8" height="37.2" rx="4" fill="url(#g_gry)" stroke="#111" stroke-width="1.6"/>
<path d="M1281.8 789.8 V815.0" stroke="#111" stroke-width="1.4"/>
<rect x="1246.5" y="824.2" width="82.5" height="12.6" rx="3.5" fill="url(#g_tea)" stroke="#111" stroke-width="1.6"/>
<rect x="1365.7" y="795.4" width="64.8" height="25.2" rx="4" fill="url(#g_brz)" stroke="#111" stroke-width="1.6"/>
<path d="M1365.7 802.1 V814.5" stroke="#111" stroke-width="1.4"/>
<rect x="1451.7" y="795.2" width="28.8" height="25.2" rx="4" fill="url(#g_gry)" stroke="#111" stroke-width="1.6"/>
<path d="M1451.7 801.5 V814.1" stroke="#111" stroke-width="1.4"/>
<rect x="1506.7" y="788.0" width="53.6" height="25.5" rx="4" fill="url(#g_red)" stroke="#111" stroke-width="1.6"/>
<path d="M1506.7 794.3 V807.2" stroke="#111" stroke-width="1.4"/>
<circle cx="291.0" cy="634.4" r="3.1" fill="#fff" stroke="#111" stroke-width="1.3"/>
<text x="287.5" y="636.4" font-size="5.4" fill="#1a1a1a" text-anchor="end">obj</text>
<text x="295.0" y="632.9" font-size="5" fill="#335">1</text>
<text x="261.5" y="633.6" font-size="6.4" font-weight="bold" fill="#111" text-anchor="middle">NurbsBase</text>
<text x="261.5" y="639.6" font-size="4.4" font-weight="bold" fill="#222" text-anchor="middle">Name</text>
<circle cx="286.0" cy="654.0" r="3.1" fill="#fff" stroke="#111" stroke-width="1.3"/>
<text x="282.5" y="656.0" font-size="5.4" fill="#1a1a1a" text-anchor="end">obj</text>
<text x="290.0" y="652.5" font-size="5" fill="#335">1</text>
<text x="258.5" y="653.9" font-size="6.4" font-weight="bold" fill="#111" text-anchor="middle">NurbsMid</text>
<text x="258.5" y="659.9" font-size="4.4" font-weight="bold" fill="#222" text-anchor="middle">Name</text>
<circle cx="288.0" cy="675.0" r="3.1" fill="#fff" stroke="#111" stroke-width="1.3"/>
<text x="284.5" y="677.0" font-size="5.4" fill="#1a1a1a" text-anchor="end">obj</text>
<text x="292.0" y="673.5" font-size="5" fill="#335">1</text>
<text x="260.5" y="674.6" font-size="6.4" font-weight="bold" fill="#111" text-anchor="middle">NurbsTop</text>
<text x="260.5" y="680.6" font-size="4.4" font-weight="bold" fill="#222" text-anchor="middle">Name</text>
<circle cx="319.0" cy="643.4" r="3.1" fill="#fff" stroke="#111" stroke-width="1.3"/>
<text x="322.5" y="645.4" font-size="5.4" fill="#1a1a1a">a</text>
<circle cx="319.0" cy="655.8" r="3.1" fill="#fff" stroke="#111" stroke-width="1.3"/>
<text x="322.5" y="657.8" font-size="5.4" fill="#1a1a1a">b</text>
<circle cx="319.0" cy="668.4" r="3.1" fill="#fff" stroke="#111" stroke-width="1.3"/>
<text x="322.5" y="670.4" font-size="5.4" fill="#1a1a1a">c</text>
<circle cx="355.0" cy="655.8" r="3.1" fill="#fff" stroke="#111" stroke-width="1.3"/>
<text x="351.5" y="657.8" font-size="5.4" fill="#1a1a1a" text-anchor="end">list</text>
<text x="359.0" y="654.3" font-size="5" fill="#335">3</text>
<text x="337.0" y="658.5" font-size="6.4" font-weight="bold" fill="#111" text-anchor="middle">List</text>
<circle cx="380.0" cy="642.5" r="3.1" fill="#fff" stroke="#111" stroke-width="1.3"/>
<text x="383.5" y="644.5" font-size="5.4" fill="#1a1a1a">group</text>
<circle cx="380.0" cy="655.5" r="3.1" fill="#fff" stroke="#111" stroke-width="1.3"/>
<text x="383.5" y="657.5" font-size="5.4" fill="#1a1a1a">objs</text>
<circle cx="438.4" cy="649.2" r="3.1" fill="#fff" stroke="#111" stroke-width="1.3"/>
<text x="434.9" y="651.2" font-size="5.4" fill="#1a1a1a" text-anchor="end">group</text>
<text x="442.4" y="647.7" font-size="5" fill="#335">1</text>
<text x="409.2" y="651.4" font-size="6.4" font-weight="bold" fill="#111" text-anchor="middle">Group</text>
<circle cx="465.6" cy="647.3" r="3.1" fill="#fff" stroke="#111" stroke-width="1.3"/>
<text x="469.1" y="649.3" font-size="5.4" fill="#1a1a1a">groupCurves</text>
<circle cx="576.0" cy="647.3" r="3.1" fill="#fff" stroke="#111" stroke-width="1.3"/>
<text x="572.5" y="649.3" font-size="5.4" fill="#1a1a1a" text-anchor="end">surface</text>
<text x="580.0" y="645.8" font-size="5" fill="#335">1</text>
<text x="520.8" y="649.8" font-size="6.4" font-weight="bold" fill="#111" text-anchor="middle">Loft Surface</text>
<circle cx="636.0" cy="622.0" r="3.1" fill="#fff" stroke="#111" stroke-width="1.3"/>
<text x="639.5" y="624.0" font-size="5.4" fill="#1a1a1a">obj</text>
<text x="658.5" y="624.5" font-size="6.4" font-weight="bold" fill="#111" text-anchor="middle">Delete</text>
<circle cx="605.5" cy="648.4" r="3.1" fill="#fff" stroke="#555" stroke-width="1.0"/>
<text x="609.0" y="650.4" font-size="5.4" fill="#1a1a1a">surface</text>
<circle cx="605.5" cy="660.6" r="3.1" fill="#fff" stroke="#555" stroke-width="1.0"/>
<text x="609.0" y="662.6" font-size="5.4" fill="#1a1a1a">divsU</text>
<circle cx="605.5" cy="673.1" r="3.1" fill="#fff" stroke="#555" stroke-width="1.0"/>
<text x="609.0" y="675.1" font-size="5.4" fill="#1a1a1a">divsV</text>
<circle cx="698.8" cy="660.6" r="3.1" fill="#fff" stroke="#555" stroke-width="1.0"/>
<text x="695.2" y="662.6" font-size="5.4" fill="#1a1a1a" text-anchor="end">frames</text>
<text x="702.8" y="659.1" font-size="5" fill="#335">667</text>
<text x="652.1" y="662.9" font-size="6.4" font-weight="bold" fill="#111" text-anchor="middle">Panelize Surface</text>
<circle cx="570.3" cy="668.8" r="3.1" fill="#fff" stroke="#111" stroke-width="1.3"/>
<text x="574.3" y="667.2" font-size="5" fill="#335">1</text>
<text x="554.6" y="668.5" font-size="7.5" font-weight="bold" fill="#111" text-anchor="middle">divsU</text>
<text x="554.6" y="674.5" font-size="4.4" font-weight="bold" fill="#222" text-anchor="middle">Int</text>
<circle cx="570.3" cy="691.1" r="3.1" fill="#fff" stroke="#111" stroke-width="1.3"/>
<text x="574.3" y="689.6" font-size="5" fill="#335">1</text>
<text x="554.6" y="690.8" font-size="7.5" font-weight="bold" fill="#111" text-anchor="middle">divsV</text>
<text x="554.6" y="696.8" font-size="4.4" font-weight="bold" fill="#222" text-anchor="middle">Int</text>
<circle cx="722.0" cy="650.5" r="3.1" fill="#fff" stroke="#111" stroke-width="1.3"/>
<text x="725.5" y="652.5" font-size="5.4" fill="#1a1a1a">poly</text>
<circle cx="829.7" cy="650.5" r="3.1" fill="#fff" stroke="#111" stroke-width="1.3"/>
<text x="826.2" y="652.5" font-size="5.4" fill="#1a1a1a" text-anchor="end">distance</text>
<text x="833.7" y="649.0" font-size="5" fill="#335">667</text>
<text x="775.9" y="653.0" font-size="6.4" font-weight="bold" fill="#111" text-anchor="middle">Quad out of Plane</text>
<circle cx="740.0" cy="672.0" r="3.1" fill="#fff" stroke="#111" stroke-width="1.3"/>
<text x="743.5" y="674.0" font-size="5.4" fill="#1a1a1a">poly</text>
<circle cx="811.7" cy="672.0" r="3.1" fill="#fff" stroke="#111" stroke-width="1.3"/>
<text x="808.2" y="674.0" font-size="5.4" fill="#1a1a1a" text-anchor="end">area</text>
<text x="815.7" y="670.5" font-size="5" fill="#335">667</text>
<text x="775.9" y="674.5" font-size="6.4" font-weight="bold" fill="#111" text-anchor="middle">Panel Areas</text>
<circle cx="698.8" cy="710.5" r="3.1" fill="#fff" stroke="#555" stroke-width="1.0"/>
<text x="695.3" y="712.5" font-size="5.4" fill="#1a1a1a" text-anchor="end">rgb</text>
<text x="702.8" y="709.0" font-size="5" fill="#335">1</text>
<text x="667.2" y="713.0" font-size="6.4" font-weight="bold" fill="#111" text-anchor="middle">Apply Color</text>
<circle cx="698.8" cy="729.4" r="3.1" fill="#fff" stroke="#555" stroke-width="1.0"/>
<text x="695.3" y="731.4" font-size="5.4" fill="#1a1a1a" text-anchor="end">rgb</text>
<text x="702.8" y="727.9" font-size="5" fill="#335">1</text>
<text x="667.2" y="731.9" font-size="6.4" font-weight="bold" fill="#111" text-anchor="middle">Apply Color</text>
<circle cx="698.8" cy="749.5" r="3.1" fill="#fff" stroke="#555" stroke-width="1.0"/>
<text x="695.3" y="751.5" font-size="5.4" fill="#1a1a1a" text-anchor="end">rgb</text>
<text x="702.8" y="748.0" font-size="5" fill="#335">1</text>
<text x="667.2" y="752.0" font-size="6.4" font-weight="bold" fill="#111" text-anchor="middle">Apply Color</text>
<circle cx="698.8" cy="768.4" r="3.1" fill="#fff" stroke="#555" stroke-width="1.0"/>
<text x="695.3" y="770.4" font-size="5.4" fill="#1a1a1a" text-anchor="end">rgb</text>
<text x="702.8" y="766.9" font-size="5" fill="#335">1</text>
<text x="667.2" y="770.9" font-size="6.4" font-weight="bold" fill="#111" text-anchor="middle">Apply Color</text>
<circle cx="720.4" cy="721.9" r="3.1" fill="#fff" stroke="#111" stroke-width="1.3"/>
<text x="723.9" y="723.9" font-size="5.4" fill="#1a1a1a">a</text>
<circle cx="720.4" cy="734.6" r="3.1" fill="#fff" stroke="#111" stroke-width="1.3"/>
<text x="723.9" y="736.6" font-size="5.4" fill="#1a1a1a">b</text>
<circle cx="720.4" cy="747.6" r="3.1" fill="#fff" stroke="#111" stroke-width="1.3"/>
<text x="723.9" y="749.6" font-size="5.4" fill="#1a1a1a">c</text>
<circle cx="720.4" cy="760.0" r="3.1" fill="#fff" stroke="#111" stroke-width="1.3"/>
<text x="723.9" y="762.0" font-size="5.4" fill="#1a1a1a">d</text>
<circle cx="755.5" cy="741.0" r="3.1" fill="#fff" stroke="#111" stroke-width="1.3"/>
<text x="752.0" y="743.0" font-size="5.4" fill="#1a1a1a" text-anchor="end">list</text>
<text x="759.5" y="739.5" font-size="5" fill="#335">4</text>
<text x="738.0" y="743.4" font-size="6.4" font-weight="bold" fill="#111" text-anchor="middle">List</text>
<circle cx="773.2" cy="741.0" r="3.1" fill="#fff" stroke="#111" stroke-width="1.3"/>
<text x="776.7" y="743.0" font-size="5.4" fill="#1a1a1a">pt</text>
<circle cx="817.8" cy="728.6" r="3.1" fill="#fff" stroke="#111" stroke-width="1.3"/>
<text x="814.3" y="730.6" font-size="5.4" fill="#1a1a1a" text-anchor="end">x</text>
<text x="821.8" y="727.1" font-size="5" fill="#335">4</text>
<circle cx="817.8" cy="741.2" r="3.1" fill="#fff" stroke="#111" stroke-width="1.3"/>
<text x="814.3" y="743.2" font-size="5.4" fill="#1a1a1a" text-anchor="end">y</text>
<text x="821.8" y="739.7" font-size="5" fill="#335">4</text>
<circle cx="817.8" cy="753.8" r="3.1" fill="#fff" stroke="#111" stroke-width="1.3"/>
<text x="814.3" y="755.8" font-size="5.4" fill="#1a1a1a" text-anchor="end">z</text>
<text x="821.8" y="752.3" font-size="5" fill="#335">4</text>
<text x="795.5" y="743.4" font-size="6.4" font-weight="bold" fill="#111" text-anchor="middle">Get XYZ</text>
<circle cx="851.0" cy="715.1" r="3.1" fill="#fff" stroke="#111" stroke-width="1.3"/>
<text x="854.5" y="717.1" font-size="5.4" fill="#1a1a1a">list</text>
<circle cx="851.0" cy="727.5" r="3.1" fill="#fff" stroke="#111" stroke-width="1.3"/>
<text x="854.5" y="729.5" font-size="5.4" fill="#1a1a1a">r</text>
<circle cx="851.0" cy="740.1" r="3.1" fill="#fff" stroke="#111" stroke-width="1.3"/>
<text x="854.5" y="742.1" font-size="5.4" fill="#1a1a1a">g</text>
<circle cx="851.0" cy="752.5" r="3.1" fill="#fff" stroke="#111" stroke-width="1.3"/>
<text x="854.5" y="754.5" font-size="5.4" fill="#1a1a1a">b</text>
<circle cx="937.0" cy="733.4" r="3.1" fill="#fff" stroke="#111" stroke-width="1.3"/>
<text x="933.5" y="735.4" font-size="5.4" fill="#1a1a1a" text-anchor="end">values</text>
<text x="941.0" y="731.9" font-size="5" fill="#335">667</text>
<text x="894.0" y="735.8" font-size="6.4" font-weight="bold" fill="#111" text-anchor="middle">Color Gradient</text>
<circle cx="982.0" cy="565.6" r="3.1" fill="#fff" stroke="#111" stroke-width="1.3"/>
<text x="985.5" y="567.6" font-size="5.4" fill="#1a1a1a">list</text>
<circle cx="1069.0" cy="565.6" r="3.1" fill="#fff" stroke="#111" stroke-width="1.3"/>
<text x="1065.5" y="567.6" font-size="5.4" fill="#1a1a1a" text-anchor="end">length</text>
<text x="1073.0" y="564.1" font-size="5" fill="#335">1</text>
<text x="1025.5" y="568.0" font-size="6.4" font-weight="bold" fill="#111" text-anchor="middle">Get List Length</text>
<circle cx="1101.5" cy="417.7" r="3.1" fill="#fff" stroke="#111" stroke-width="1.3"/>
<text x="1098.0" y="419.7" font-size="5.4" fill="#1a1a1a" text-anchor="end">s</text>
<text x="1105.5" y="416.2" font-size="5" fill="#335">1</text>
<text x="1083.5" y="420.0" font-size="6.4" font-weight="bold" fill="#111" text-anchor="middle">String</text>
<circle cx="1123.4" cy="417.7" r="3.1" fill="#fff" stroke="#333" stroke-width="1.2"/>
<text x="1126.9" y="419.7" font-size="5.4" fill="#1a1a1a">name</text>
<circle cx="1123.4" cy="430.2" r="3.1" fill="#fff" stroke="#333" stroke-width="1.2"/>
<text x="1126.9" y="432.2" font-size="5.4" fill="#1a1a1a">rows</text>
<circle cx="1123.4" cy="442.7" r="3.1" fill="#fff" stroke="#333" stroke-width="1.2"/>
<text x="1126.9" y="444.7" font-size="5.4" fill="#1a1a1a">columns</text>
<circle cx="1236.7" cy="430.2" r="3.1" fill="#fff" stroke="#777" stroke-width="1.0"/>
<text x="1233.2" y="432.2" font-size="5.4" fill="#1a1a1a" text-anchor="end">worksheet</text>
<text x="1240.7" y="428.7" font-size="5" fill="#335">1</text>
<text x="1180.1" y="432.4" font-size="6.4" font-weight="bold" fill="#111" text-anchor="middle">Create Worksheet</text>
<circle cx="1097.0" cy="442.7" r="3.1" fill="#fff" stroke="#111" stroke-width="1.3"/>
<text x="1093.5" y="444.7" font-size="5.4" fill="#1a1a1a" text-anchor="end">i</text>
<text x="1101.0" y="441.2" font-size="5" fill="#335">1</text>
<text x="1085.5" y="445.7" font-size="6.4" font-weight="bold" fill="#111" text-anchor="middle">Int</text>
<circle cx="1147.0" cy="466.5" r="3.1" fill="#fff" stroke="#111" stroke-width="1.3"/>
<text x="1143.5" y="468.5" font-size="5.4" fill="#1a1a1a" text-anchor="end">i</text>
<text x="1151.0" y="465.0" font-size="5" fill="#335">1</text>
<text x="1136.0" y="468.9" font-size="6.4" font-weight="bold" fill="#111" text-anchor="middle">Int</text>
<circle cx="1147.0" cy="491.6" r="3.1" fill="#fff" stroke="#111" stroke-width="1.3"/>
<text x="1143.5" y="493.6" font-size="5.4" fill="#1a1a1a" text-anchor="end">i</text>
<text x="1151.0" y="490.1" font-size="5" fill="#335">1</text>
<text x="1136.0" y="494.3" font-size="6.4" font-weight="bold" fill="#111" text-anchor="middle">Int</text>
<circle cx="1165.6" cy="466.7" r="3.1" fill="#fff" stroke="#111" stroke-width="1.3"/>
<text x="1169.1" y="468.7" font-size="5.4" fill="#1a1a1a">start</text>
<circle cx="1165.6" cy="479.4" r="3.1" fill="#fff" stroke="#111" stroke-width="1.3"/>
<text x="1169.1" y="481.4" font-size="5.4" fill="#1a1a1a">stop</text>
<circle cx="1165.6" cy="491.9" r="3.1" fill="#fff" stroke="#111" stroke-width="1.3"/>
<text x="1169.1" y="493.9" font-size="5.4" fill="#1a1a1a">step</text>
<circle cx="1236.0" cy="479.4" r="3.1" fill="#fff" stroke="#111" stroke-width="1.3"/>
<text x="1232.5" y="481.4" font-size="5.4" fill="#1a1a1a" text-anchor="end">list</text>
<text x="1240.0" y="477.9" font-size="5" fill="#335">667</text>
<text x="1200.8" y="478.2" font-size="6.4" font-weight="bold" fill="#111" text-anchor="middle">Row Counter</text>
<text x="1200.8" y="484.2" font-size="4.4" font-weight="bold" fill="#222" text-anchor="middle">Sequence</text>
<circle cx="1308.6" cy="483.6" r="3.1" fill="#fff" stroke="#111" stroke-width="1.3"/>
<text x="1305.1" y="485.6" font-size="5.4" fill="#1a1a1a" text-anchor="end">i</text>
<text x="1312.6" y="482.1" font-size="5" fill="#335">1</text>
<text x="1283.2" y="482.6" font-size="6.4" font-weight="bold" fill="#111" text-anchor="middle">Header Row</text>
<text x="1283.2" y="488.6" font-size="4.4" font-weight="bold" fill="#222" text-anchor="middle">Int</text>
<circle cx="1235.0" cy="511.2" r="3.1" fill="#fff" stroke="#111" stroke-width="1.3"/>
<text x="1231.5" y="513.2" font-size="5.4" fill="#1a1a1a" text-anchor="end">i</text>
<text x="1239.0" y="509.8" font-size="5" fill="#335">1</text>
<text x="1224.0" y="513.4" font-size="6.4" font-weight="bold" fill="#111" text-anchor="middle">Int</text>
<circle cx="1261.0" cy="508.6" r="3.1" fill="#fff" stroke="#111" stroke-width="1.3"/>
<text x="1264.5" y="510.6" font-size="5.4" fill="#1a1a1a">a</text>
<circle cx="1261.0" cy="521.6" r="3.1" fill="#fff" stroke="#111" stroke-width="1.3"/>
<text x="1264.5" y="523.6" font-size="5.4" fill="#1a1a1a">b</text>
<circle cx="1290.0" cy="515.2" r="3.1" fill="#fff" stroke="#111" stroke-width="1.3"/>
<text x="1286.5" y="517.2" font-size="5.4" fill="#1a1a1a" text-anchor="end">c</text>
<text x="1294.0" y="513.7" font-size="5" fill="#335">667</text>
<text x="1275.5" y="517.1" font-size="6.4" font-weight="bold" fill="#111" text-anchor="middle">add</text>
<circle cx="1236.7" cy="542.3" r="3.1" fill="#fff" stroke="#111" stroke-width="1.3"/>
<text x="1233.2" y="544.3" font-size="5.4" fill="#1a1a1a" text-anchor="end">i</text>
<text x="1240.7" y="540.8" font-size="5" fill="#335">1</text>
<text x="1196.1" y="541.5" font-size="6.4" font-weight="bold" fill="#111" text-anchor="middle">Panel Number Column</text>
<text x="1196.1" y="547.5" font-size="4.4" font-weight="bold" fill="#222" text-anchor="middle">Int</text>
<circle cx="1261.0" cy="557.0" r="3.1" fill="#fff" stroke="#111" stroke-width="1.3"/>
<text x="1264.5" y="559.0" font-size="5.4" fill="#1a1a1a">item</text>
<circle cx="1261.0" cy="570.0" r="3.1" fill="#fff" stroke="#111" stroke-width="1.3"/>
<text x="1264.5" y="572.0" font-size="5.4" fill="#1a1a1a">n</text>
<circle cx="1313.3" cy="563.4" r="3.1" fill="#fff" stroke="#111" stroke-width="1.3"/>
<text x="1309.8" y="565.4" font-size="5.4" fill="#1a1a1a" text-anchor="end">list</text>
<text x="1317.3" y="561.9" font-size="5" fill="#335">667</text>
<text x="1287.2" y="565.5" font-size="6.4" font-weight="bold" fill="#111" text-anchor="middle">Repeat</text>
<circle cx="1238.0" cy="586.7" r="3.1" fill="#fff" stroke="#111" stroke-width="1.3"/>
<text x="1234.5" y="588.7" font-size="5.4" fill="#1a1a1a" text-anchor="end">i</text>
<text x="1242.0" y="585.2" font-size="5" fill="#335">1</text>
<text x="1199.8" y="586.1" font-size="6.4" font-weight="bold" fill="#111" text-anchor="middle">Out of Plane Column</text>
<text x="1199.8" y="592.1" font-size="4.4" font-weight="bold" fill="#222" text-anchor="middle">Int</text>
<circle cx="1261.0" cy="597.0" r="3.1" fill="#fff" stroke="#111" stroke-width="1.3"/>
<text x="1264.5" y="599.0" font-size="5.4" fill="#1a1a1a">item</text>
<circle cx="1261.0" cy="609.8" r="3.1" fill="#fff" stroke="#111" stroke-width="1.3"/>
<text x="1264.5" y="611.8" font-size="5.4" fill="#1a1a1a">n</text>
<circle cx="1313.3" cy="603.6" r="3.1" fill="#fff" stroke="#111" stroke-width="1.3"/>
<text x="1309.8" y="605.6" font-size="5.4" fill="#1a1a1a" text-anchor="end">list</text>
<text x="1317.3" y="602.1" font-size="5" fill="#335">667</text>
<text x="1287.2" y="605.8" font-size="6.4" font-weight="bold" fill="#111" text-anchor="middle">Repeat</text>
<circle cx="1234.7" cy="627.5" r="3.1" fill="#fff" stroke="#111" stroke-width="1.3"/>
<text x="1231.2" y="629.5" font-size="5.4" fill="#1a1a1a" text-anchor="end">i</text>
<text x="1238.7" y="626.0" font-size="5" fill="#335">1</text>
<text x="1198.8" y="626.8" font-size="6.4" font-weight="bold" fill="#111" text-anchor="middle">Panel Area Column</text>
<text x="1198.8" y="632.8" font-size="4.4" font-weight="bold" fill="#222" text-anchor="middle">Int</text>
<circle cx="1261.0" cy="629.8" r="3.1" fill="#fff" stroke="#111" stroke-width="1.3"/>
<text x="1264.5" y="631.8" font-size="5.4" fill="#1a1a1a">item</text>
<circle cx="1261.0" cy="642.3" r="3.1" fill="#fff" stroke="#111" stroke-width="1.3"/>
<text x="1264.5" y="644.3" font-size="5.4" fill="#1a1a1a">n</text>
<circle cx="1313.3" cy="636.1" r="3.1" fill="#fff" stroke="#111" stroke-width="1.3"/>
<text x="1309.8" y="638.1" font-size="5.4" fill="#1a1a1a" text-anchor="end">list</text>
<text x="1317.3" y="634.6" font-size="5" fill="#335">667</text>
<text x="1287.2" y="638.4" font-size="6.4" font-weight="bold" fill="#111" text-anchor="middle">Repeat</text>
<circle cx="1346.6" cy="561.0" r="3.1" fill="#fff" stroke="#111" stroke-width="1.3"/>
<text x="1350.1" y="563.0" font-size="5.4" fill="#1a1a1a">item0</text>
<circle cx="1346.6" cy="573.5" r="3.1" fill="#fff" stroke="#111" stroke-width="1.3"/>
<text x="1350.1" y="575.5" font-size="5.4" fill="#1a1a1a">item1</text>
<circle cx="1346.6" cy="586.1" r="3.1" fill="#fff" stroke="#111" stroke-width="1.3"/>
<text x="1350.1" y="588.1" font-size="5.4" fill="#1a1a1a">item2</text>
<circle cx="1346.6" cy="598.6" r="3.1" fill="#fff" stroke="#111" stroke-width="1.3"/>
<text x="1350.1" y="600.6" font-size="5.4" fill="#1a1a1a">item3</text>
<circle cx="1346.6" cy="611.1" r="3.1" fill="#fff" stroke="#111" stroke-width="1.3"/>
<text x="1350.1" y="613.1" font-size="5.4" fill="#1a1a1a">item4</text>
<circle cx="1346.6" cy="623.6" r="3.1" fill="#fff" stroke="#111" stroke-width="1.3"/>
<text x="1350.1" y="625.6" font-size="5.4" fill="#1a1a1a">item5</text>
<circle cx="1436.0" cy="591.9" r="3.1" fill="#fff" stroke="#111" stroke-width="1.3"/>
<text x="1432.5" y="593.9" font-size="5.4" fill="#1a1a1a" text-anchor="end">list</text>
<text x="1440.0" y="590.4" font-size="5" fill="#335">2004</text>
<text x="1391.3" y="590.3" font-size="6.4" font-weight="bold" fill="#111" text-anchor="middle">Column Numbers</text>
<text x="1391.3" y="597.3" font-size="4.4" font-weight="bold" fill="#222" text-anchor="middle">Merge</text>
<circle cx="1350.5" cy="461.3" r="3.1" fill="#fff" stroke="#111" stroke-width="1.3"/>
<text x="1354.0" y="463.3" font-size="5.4" fill="#1a1a1a">item0</text>
<circle cx="1350.5" cy="473.9" r="3.1" fill="#fff" stroke="#111" stroke-width="1.3"/>
<text x="1354.0" y="475.9" font-size="5.4" fill="#1a1a1a">item1</text>
<circle cx="1350.5" cy="486.5" r="3.1" fill="#fff" stroke="#111" stroke-width="1.3"/>
<text x="1354.0" y="488.5" font-size="5.4" fill="#1a1a1a">item2</text>
<circle cx="1350.5" cy="499.1" r="3.1" fill="#fff" stroke="#111" stroke-width="1.3"/>
<text x="1354.0" y="501.1" font-size="5.4" fill="#1a1a1a">item3</text>
<circle cx="1350.5" cy="511.7" r="3.1" fill="#fff" stroke="#111" stroke-width="1.3"/>
<text x="1354.0" y="513.7" font-size="5.4" fill="#1a1a1a">item4</text>
<circle cx="1350.5" cy="524.3" r="3.1" fill="#fff" stroke="#111" stroke-width="1.3"/>
<text x="1354.0" y="526.3" font-size="5.4" fill="#1a1a1a">item5</text>
<circle cx="1430.0" cy="492.5" r="3.1" fill="#fff" stroke="#111" stroke-width="1.3"/>
<text x="1426.5" y="494.5" font-size="5.4" fill="#1a1a1a" text-anchor="end">list</text>
<text x="1434.0" y="491.0" font-size="5" fill="#335">2004</text>
<text x="1390.2" y="491.0" font-size="6.4" font-weight="bold" fill="#111" text-anchor="middle">Row Numbers</text>
<text x="1390.2" y="498.0" font-size="4.4" font-weight="bold" fill="#222" text-anchor="middle">Merge</text>
<circle cx="1498.3" cy="517.3" r="3.1" fill="#fff" stroke="#333" stroke-width="1.2"/>
<text x="1501.8" y="519.3" font-size="5.4" fill="#1a1a1a">worksheet</text>
<circle cx="1608.3" cy="517.3" r="3.1" fill="#fff" stroke="#777" stroke-width="1.0"/>
<text x="1604.8" y="519.3" font-size="5.4" fill="#1a1a1a" text-anchor="end">worksheet</text>
<text x="1612.3" y="515.8" font-size="5" fill="#335">1</text>
<text x="1553.3" y="520.0" font-size="6.4" font-weight="bold" fill="#111" text-anchor="middle">Set Auto Recalc</text>
<circle cx="1501.6" cy="541.0" r="3.1" fill="#fff" stroke="#333" stroke-width="1.2"/>
<text x="1505.1" y="543.0" font-size="5.4" fill="#1a1a1a">worksheet</text>
<circle cx="1501.6" cy="553.2" r="3.1" fill="#fff" stroke="#333" stroke-width="1.2"/>
<text x="1505.1" y="555.2" font-size="5.4" fill="#1a1a1a">topRow</text>
<circle cx="1501.6" cy="565.8" r="3.1" fill="#fff" stroke="#333" stroke-width="1.2"/>
<text x="1505.1" y="567.8" font-size="5.4" fill="#1a1a1a">leftColumn</text>
<circle cx="1501.6" cy="578.2" r="3.1" fill="#fff" stroke="#333" stroke-width="1.2"/>
<text x="1505.1" y="580.2" font-size="5.4" fill="#1a1a1a">bottomRow</text>
<circle cx="1501.6" cy="590.8" r="3.1" fill="#fff" stroke="#333" stroke-width="1.2"/>
<text x="1505.1" y="592.8" font-size="5.4" fill="#1a1a1a">rightColumn</text>
<circle cx="1501.6" cy="603.1" r="3.1" fill="#fff" stroke="#333" stroke-width="1.2"/>
<text x="1505.1" y="605.1" font-size="5.4" fill="#1a1a1a">formula</text>
<text x="1554.7" y="574.3" font-size="6.4" font-weight="bold" fill="#111" text-anchor="middle">Set Cell Value</text>
<circle cx="1339.7" cy="663.7" r="3.1" fill="#fff" stroke="#111" stroke-width="1.3"/>
<text x="1336.2" y="665.7" font-size="5.4" fill="#1a1a1a" text-anchor="end">s</text>
<text x="1343.7" y="662.2" font-size="5" fill="#335">1</text>
<text x="1299.0" y="663.3" font-size="6.4" font-weight="bold" fill="#111" text-anchor="middle">Plane Number Header</text>
<text x="1299.0" y="669.3" font-size="4.4" font-weight="bold" fill="#222" text-anchor="middle">String</text>
<circle cx="1334.5" cy="691.2" r="3.1" fill="#fff" stroke="#111" stroke-width="1.3"/>
<text x="1331.0" y="693.2" font-size="5.4" fill="#1a1a1a" text-anchor="end">s</text>
<text x="1338.5" y="689.7" font-size="5" fill="#335">1</text>
<text x="1296.2" y="690.9" font-size="6.4" font-weight="bold" fill="#111" text-anchor="middle">Out of Plane Header</text>
<text x="1296.2" y="696.9" font-size="4.4" font-weight="bold" fill="#222" text-anchor="middle">String</text>
<circle cx="1330.3" cy="720.6" r="3.1" fill="#fff" stroke="#111" stroke-width="1.3"/>
<text x="1326.8" y="722.6" font-size="5.4" fill="#1a1a1a" text-anchor="end">s</text>
<text x="1334.3" y="719.1" font-size="5" fill="#335">1</text>
<text x="1294.2" y="720.1" font-size="6.4" font-weight="bold" fill="#111" text-anchor="middle">Panel Area Header</text>
<text x="1294.2" y="726.1" font-size="4.4" font-weight="bold" fill="#222" text-anchor="middle">String</text>
<circle cx="1365.5" cy="663.8" r="3.1" fill="#fff" stroke="#111" stroke-width="1.3"/>
<text x="1369.0" y="665.8" font-size="5.4" fill="#1a1a1a">item0</text>
<circle cx="1365.5" cy="676.3" r="3.1" fill="#fff" stroke="#111" stroke-width="1.3"/>
<text x="1369.0" y="678.3" font-size="5.4" fill="#1a1a1a">item1</text>
<circle cx="1365.5" cy="688.9" r="3.1" fill="#fff" stroke="#111" stroke-width="1.3"/>
<text x="1369.0" y="690.9" font-size="5.4" fill="#1a1a1a">item2</text>
<circle cx="1365.5" cy="701.4" r="3.1" fill="#fff" stroke="#111" stroke-width="1.3"/>
<text x="1369.0" y="703.4" font-size="5.4" fill="#1a1a1a">item3</text>
<circle cx="1365.5" cy="714.0" r="3.1" fill="#fff" stroke="#111" stroke-width="1.3"/>
<text x="1369.0" y="716.0" font-size="5.4" fill="#1a1a1a">item4</text>
<circle cx="1365.5" cy="726.5" r="3.1" fill="#fff" stroke="#111" stroke-width="1.3"/>
<text x="1369.0" y="728.5" font-size="5.4" fill="#1a1a1a">item5</text>
<circle cx="1422.8" cy="695.0" r="3.1" fill="#fff" stroke="#111" stroke-width="1.3"/>
<text x="1419.3" y="697.0" font-size="5.4" fill="#1a1a1a" text-anchor="end">list</text>
<text x="1426.8" y="693.5" font-size="5" fill="#335">2004</text>
<text x="1394.2" y="693.2" font-size="6.4" font-weight="bold" fill="#111" text-anchor="middle">Values</text>
<text x="1394.2" y="700.2" font-size="4.4" font-weight="bold" fill="#222" text-anchor="middle">Merge</text>
<circle cx="998.6" cy="658.1" r="3.1" fill="#fff" stroke="#111" stroke-width="1.3"/>
<text x="1002.1" y="660.1" font-size="5.4" fill="#1a1a1a">obj</text>
<circle cx="998.6" cy="671.2" r="3.1" fill="#fff" stroke="#111" stroke-width="1.3"/>
<text x="1002.1" y="673.2" font-size="5.4" fill="#1a1a1a">backColor</text>
<circle cx="998.6" cy="683.5" r="3.1" fill="#fff" stroke="#111" stroke-width="1.3"/>
<text x="1002.1" y="685.5" font-size="5.4" fill="#1a1a1a">foreColor</text>
<circle cx="998.6" cy="696.1" r="3.1" fill="#fff" stroke="#111" stroke-width="1.3"/>
<text x="1002.1" y="698.1" font-size="5.4" fill="#1a1a1a">iAxisEndPt</text>
<circle cx="998.6" cy="708.8" r="3.1" fill="#fff" stroke="#111" stroke-width="1.3"/>
<text x="1002.1" y="710.8" font-size="5.4" fill="#1a1a1a">jAxisEndPt</text>
<circle cx="998.6" cy="721.6" r="3.1" fill="#fff" stroke="#111" stroke-width="1.3"/>
<text x="1002.1" y="723.6" font-size="5.4" fill="#1a1a1a">originPt</text>
<circle cx="998.6" cy="734.0" r="3.1" fill="#fff" stroke="#111" stroke-width="1.3"/>
<text x="1002.1" y="736.0" font-size="5.4" fill="#1a1a1a">pattern</text>
<circle cx="1081.5" cy="696.1" r="3.1" fill="#fff" stroke="#111" stroke-width="1.3"/>
<text x="1078.0" y="698.1" font-size="5.4" fill="#1a1a1a" text-anchor="end">obj</text>
<text x="1085.5" y="694.6" font-size="5" fill="#335">667</text>
<text x="1040.0" y="698.6" font-size="6.4" font-weight="bold" fill="#111" text-anchor="middle">Set Fill</text>
<circle cx="1081.6" cy="766.1" r="3.1" fill="#fff" stroke="#111" stroke-width="1.3"/>
<text x="1078.1" y="768.1" font-size="5.4" fill="#1a1a1a" text-anchor="end">r</text>
<text x="1085.6" y="764.6" font-size="5" fill="#335">1</text>
<text x="1067.2" y="768.4" font-size="6.4" font-weight="bold" fill="#111" text-anchor="middle">Real</text>
<circle cx="1052.7" cy="783.0" r="3.1" fill="#fff" stroke="#111" stroke-width="1.3"/>
<text x="1056.2" y="785.0" font-size="5.4" fill="#1a1a1a">a</text>
<circle cx="1052.7" cy="795.6" r="3.1" fill="#fff" stroke="#111" stroke-width="1.3"/>
<text x="1056.2" y="797.6" font-size="5.4" fill="#1a1a1a">b</text>
<circle cx="1081.6" cy="789.3" r="3.1" fill="#fff" stroke="#111" stroke-width="1.3"/>
<text x="1078.1" y="791.3" font-size="5.4" fill="#1a1a1a" text-anchor="end">c</text>
<text x="1085.6" y="787.8" font-size="5" fill="#335">1</text>
<text x="1067.2" y="791.5" font-size="6.4" font-weight="bold" fill="#111" text-anchor="middle">add</text>
<circle cx="1035.0" cy="809.3" r="3.1" fill="#fff" stroke="#111" stroke-width="1.3"/>
<text x="1031.5" y="811.3" font-size="5.4" fill="#1a1a1a" text-anchor="end">i</text>
<text x="1039.0" y="807.8" font-size="5" fill="#335">1</text>
<text x="1024.0" y="812.0" font-size="6.4" font-weight="bold" fill="#111" text-anchor="middle">Int</text>
<circle cx="1081.9" cy="817.9" r="3.1" fill="#fff" stroke="#111" stroke-width="1.3"/>
<text x="1078.4" y="819.9" font-size="5.4" fill="#1a1a1a" text-anchor="end">r</text>
<text x="1085.9" y="816.4" font-size="5" fill="#335">1</text>
<text x="1067.9" y="820.4" font-size="6.4" font-weight="bold" fill="#111" text-anchor="middle">Real</text>
<circle cx="1053.3" cy="834.5" r="3.1" fill="#fff" stroke="#111" stroke-width="1.3"/>
<text x="1056.8" y="836.5" font-size="5.4" fill="#1a1a1a">a</text>
<circle cx="1053.3" cy="846.8" r="3.1" fill="#fff" stroke="#111" stroke-width="1.3"/>
<text x="1056.8" y="848.8" font-size="5.4" fill="#1a1a1a">b</text>
<circle cx="1082.0" cy="840.8" r="3.1" fill="#fff" stroke="#111" stroke-width="1.3"/>
<text x="1078.5" y="842.8" font-size="5.4" fill="#1a1a1a" text-anchor="end">c</text>
<text x="1086.0" y="839.3" font-size="5" fill="#335">1</text>
<text x="1067.7" y="843.2" font-size="6.4" font-weight="bold" fill="#111" text-anchor="middle">add</text>
<circle cx="1108.6" cy="754.3" r="3.1" fill="#fff" stroke="#111" stroke-width="1.3"/>
<text x="1112.1" y="756.3" font-size="5.4" fill="#1a1a1a">start</text>
<circle cx="1108.6" cy="766.9" r="3.1" fill="#fff" stroke="#111" stroke-width="1.3"/>
<text x="1112.1" y="768.9" font-size="5.4" fill="#1a1a1a">step</text>
<circle cx="1108.6" cy="779.2" r="3.1" fill="#fff" stroke="#111" stroke-width="1.3"/>
<text x="1112.1" y="781.2" font-size="5.4" fill="#1a1a1a">count</text>
<circle cx="1158.7" cy="766.7" r="3.1" fill="#fff" stroke="#111" stroke-width="1.3"/>
<text x="1155.2" y="768.7" font-size="5.4" fill="#1a1a1a" text-anchor="end">list</text>
<text x="1162.7" y="765.2" font-size="5" fill="#335">16</text>
<text x="1133.7" y="769.0" font-size="6.4" font-weight="bold" fill="#111" text-anchor="middle">Series</text>
<circle cx="1111.7" cy="812.4" r="3.1" fill="#fff" stroke="#111" stroke-width="1.3"/>
<text x="1115.2" y="814.4" font-size="5.4" fill="#1a1a1a">start</text>
<circle cx="1111.7" cy="825.0" r="3.1" fill="#fff" stroke="#111" stroke-width="1.3"/>
<text x="1115.2" y="827.0" font-size="5.4" fill="#1a1a1a">step</text>
<circle cx="1111.7" cy="837.6" r="3.1" fill="#fff" stroke="#111" stroke-width="1.3"/>
<text x="1115.2" y="839.6" font-size="5.4" fill="#1a1a1a">count</text>
<circle cx="1161.8" cy="825.0" r="3.1" fill="#fff" stroke="#111" stroke-width="1.3"/>
<text x="1158.3" y="827.0" font-size="5.4" fill="#1a1a1a" text-anchor="end">list</text>
<text x="1165.8" y="823.5" font-size="5" fill="#335">29</text>
<text x="1136.8" y="827.6" font-size="6.4" font-weight="bold" fill="#111" text-anchor="middle">Series</text>
<circle cx="1194.7" cy="788.6" r="3.1" fill="#fff" stroke="#111" stroke-width="1.3"/>
<text x="1198.2" y="790.6" font-size="5.4" fill="#1a1a1a">list1</text>
<circle cx="1194.7" cy="801.3" r="3.1" fill="#fff" stroke="#111" stroke-width="1.3"/>
<text x="1198.2" y="803.3" font-size="5.4" fill="#1a1a1a">list2</text>
<circle cx="1257.3" cy="788.6" r="3.1" fill="#fff" stroke="#111" stroke-width="1.3"/>
<text x="1253.8" y="790.6" font-size="5.4" fill="#1a1a1a" text-anchor="end">resList1</text>
<text x="1261.3" y="787.1" font-size="5" fill="#335">1334</text>
<circle cx="1257.3" cy="801.3" r="3.1" fill="#fff" stroke="#111" stroke-width="1.3"/>
<text x="1253.8" y="803.3" font-size="5.4" fill="#1a1a1a" text-anchor="end">resList2</text>
<text x="1261.3" y="799.8" font-size="5" fill="#335">1334</text>
<text x="1226.0" y="794.1" font-size="6.4" font-weight="bold" fill="#111" text-anchor="middle">XRef</text>
<text x="1226.0" y="800.1" font-size="4.4" font-weight="bold" fill="#222" text-anchor="middle">Mix2</text>
<circle cx="1281.8" cy="789.8" r="3.1" fill="#fff" stroke="#111" stroke-width="1.3"/>
<text x="1285.3" y="791.8" font-size="5.4" fill="#1a1a1a">x</text>
<circle cx="1281.8" cy="802.4" r="3.1" fill="#fff" stroke="#111" stroke-width="1.3"/>
<text x="1285.3" y="804.4" font-size="5.4" fill="#1a1a1a">y</text>
<circle cx="1281.8" cy="815.0" r="3.1" fill="#fff" stroke="#111" stroke-width="1.3"/>
<text x="1285.3" y="817.0" font-size="5.4" fill="#1a1a1a">z</text>
<circle cx="1327.6" cy="802.2" r="3.1" fill="#fff" stroke="#111" stroke-width="1.3"/>
<text x="1324.1" y="804.2" font-size="5.4" fill="#1a1a1a" text-anchor="end">pt</text>
<text x="1331.6" y="800.7" font-size="5" fill="#335">1334</text>
<text x="1304.7" y="804.6" font-size="6.4" font-weight="bold" fill="#111" text-anchor="middle">Point 3D</text>
<circle cx="1246.5" cy="830.5" r="3.1" fill="#fff" stroke="#111" stroke-width="1.3"/>
<text x="1250.0" y="832.5" font-size="5.4" fill="#1a1a1a">poly</text>
<circle cx="1329.0" cy="830.5" r="3.1" fill="#fff" stroke="#111" stroke-width="1.3"/>
<text x="1325.5" y="832.5" font-size="5.4" fill="#1a1a1a" text-anchor="end">centerPt</text>
<text x="1333.0" y="829.0" font-size="5" fill="#335">667</text>
<text x="1287.8" y="833.0" font-size="6.4" font-weight="bold" fill="#111" text-anchor="middle">Get Center</text>
<circle cx="1365.7" cy="802.1" r="3.1" fill="#fff" stroke="#111" stroke-width="1.3"/>
<text x="1369.2" y="804.1" font-size="5.4" fill="#1a1a1a">list1</text>
<circle cx="1365.7" cy="814.5" r="3.1" fill="#fff" stroke="#111" stroke-width="1.3"/>
<text x="1369.2" y="816.5" font-size="5.4" fill="#1a1a1a">list2</text>
<circle cx="1430.5" cy="802.1" r="3.1" fill="#fff" stroke="#111" stroke-width="1.3"/>
<text x="1427.0" y="804.1" font-size="5.4" fill="#1a1a1a" text-anchor="end">resList1</text>
<text x="1434.5" y="800.6" font-size="5" fill="#335">667</text>
<circle cx="1430.5" cy="814.5" r="3.1" fill="#fff" stroke="#111" stroke-width="1.3"/>
<text x="1427.0" y="816.5" font-size="5.4" fill="#1a1a1a" text-anchor="end">resList2</text>
<text x="1434.5" y="813.0" font-size="5" fill="#335">667</text>
<text x="1398.1" y="807.5" font-size="6.4" font-weight="bold" fill="#111" text-anchor="middle">Short</text>
<text x="1398.1" y="813.5" font-size="4.4" font-weight="bold" fill="#222" text-anchor="middle">Mix2</text>
<circle cx="1451.7" cy="801.5" r="3.1" fill="#fff" stroke="#111" stroke-width="1.3"/>
<text x="1455.2" y="803.5" font-size="5.4" fill="#1a1a1a">a</text>
<circle cx="1451.7" cy="814.1" r="3.1" fill="#fff" stroke="#111" stroke-width="1.3"/>
<text x="1455.2" y="816.1" font-size="5.4" fill="#1a1a1a">b</text>
<circle cx="1480.5" cy="807.8" r="3.1" fill="#fff" stroke="#111" stroke-width="1.3"/>
<text x="1477.0" y="809.8" font-size="5.4" fill="#1a1a1a" text-anchor="end">c</text>
<text x="1484.5" y="806.3" font-size="5" fill="#335">667</text>
<text x="1466.1" y="810.3" font-size="6.4" font-weight="bold" fill="#111" text-anchor="middle">sub</text>
<circle cx="1506.7" cy="794.3" r="3.1" fill="#fff" stroke="#111" stroke-width="1.3"/>
<text x="1510.2" y="796.3" font-size="5.4" fill="#1a1a1a">in</text>
<circle cx="1506.7" cy="807.2" r="3.1" fill="#fff" stroke="#111" stroke-width="1.3"/>
<text x="1510.2" y="809.2" font-size="5.4" fill="#1a1a1a">offset</text>
<circle cx="1560.3" cy="801.0" r="3.1" fill="#fff" stroke="#111" stroke-width="1.3"/>
<text x="1556.8" y="803.0" font-size="5.4" fill="#1a1a1a" text-anchor="end">out</text>
<text x="1564.3" y="799.5" font-size="5" fill="#335">0</text>
<text x="1533.5" y="803.2" font-size="6.4" font-weight="bold" fill="#111" text-anchor="middle">Move</text>
<path d="M829.7 650.5 C1097.6 650.5 1097.6 701.4 1365.5 701.4 M811.7 672.0 C1088.6 672.0 1088.6 726.5 1365.5 726.5 M1069.0 565.6 C1117.3 565.6 1117.3 479.4 1165.6 479.4" fill="none" stroke="#111" stroke-width="1.7"/>
</g></svg>
</body></html>
